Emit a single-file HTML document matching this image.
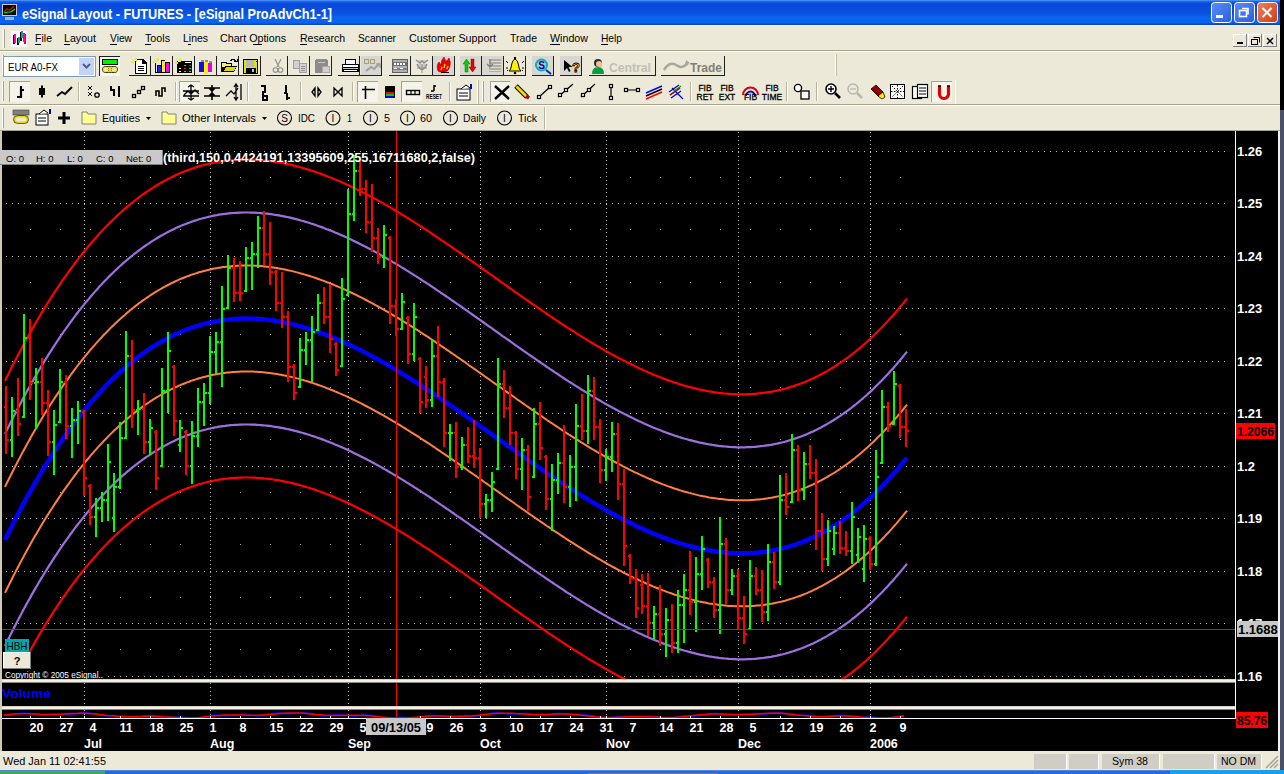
<!DOCTYPE html><html><head><meta charset="utf-8"><style>
html,body{margin:0;padding:0;width:1284px;height:774px;overflow:hidden;background:#ece9d8;}
svg{position:absolute;left:0;top:0;display:block;}
</style></head><body>
<svg width="1284" height="774" viewBox="0 0 1284 774" font-family='"Liberation Sans", sans-serif'>
<defs><linearGradient id="tb" x1="0" y1="0" x2="0" y2="1"><stop offset="0" stop-color="#5a9cf8"/><stop offset="0.06" stop-color="#1a66ee"/><stop offset="0.15" stop-color="#0848d8"/><stop offset="0.55" stop-color="#0a52e0"/><stop offset="0.7" stop-color="#0a66f2"/><stop offset="0.9" stop-color="#0a62ee"/><stop offset="1" stop-color="#0640c8"/></linearGradient><linearGradient id="bb" x1="0" y1="0" x2="1" y2="1"><stop offset="0" stop-color="#5a8ef8"/><stop offset="1" stop-color="#2a5ee0"/></linearGradient><linearGradient id="cb" x1="0" y1="0" x2="1" y2="1"><stop offset="0" stop-color="#f08060"/><stop offset="1" stop-color="#d03c10"/></linearGradient></defs>
<rect x="0" y="0" width="1284" height="25" fill="url(#tb)"/>
<rect x="2" y="4" width="15" height="12" fill="#c8c8c8"/><rect x="3" y="5" width="13" height="10" fill="#000"/><polyline points="4,12 7,9 10,10 14,6" stroke="#f00" stroke-width="1.2" fill="none"/><polyline points="4,13 8,12 11,12 15,9" stroke="#0f0" stroke-width="1.2" fill="none"/><rect x="5" y="17" width="9" height="3" fill="#b0b0b0"/>
<text x="22" y="18.5" font-size="14.5" font-weight="bold" fill="#fff" textLength="310" lengthAdjust="spacingAndGlyphs">eSignal Layout - FUTURES - [eSignal ProAdvCh1-1]</text>
<rect x="1211.5" y="2.5" width="20" height="20" rx="3" fill="url(#bb)" stroke="#fff" stroke-width="1"/>
<rect x="1234.5" y="2.5" width="20" height="20" rx="3" fill="url(#bb)" stroke="#fff" stroke-width="1"/>
<rect x="1257.5" y="2.5" width="20" height="20" rx="3" fill="url(#cb)" stroke="#fff" stroke-width="1"/>
<rect x="1216" y="15" width="7" height="3" fill="#fff"/>
<rect x="1239.5" y="10.5" width="7" height="6" fill="none" stroke="#fff" stroke-width="1.6"/><path d="M1242 8.5h6v6" fill="none" stroke="#fff" stroke-width="1.6"/>
<path d="M1262.5 8l9 9M1271.5 8l-9 9" stroke="#fff" stroke-width="2"/>
<rect x="1280" y="0" width="4" height="25" fill="#000"/>
<rect x="0" y="25" width="1280" height="106" fill="#ece9d8"/>
<rect x="0" y="25" width="1280" height="1" fill="#f6f4ec"/>
<rect x="0" y="50" width="1280" height="1" fill="#a8a490"/><rect x="0" y="51" width="1280" height="1" fill="#fff"/>
<rect x="3" y="29" width="1" height="19" fill="#fff"/><rect x="4" y="29" width="1" height="19" fill="#a0a0a0"/>
<rect x="11" y="31" width="16" height="16" fill="#fff"/><rect x="13" y="35" width="2" height="9" fill="#000"/><rect x="14" y="34" width="2" height="9" fill="#f0a"/><rect x="17" y="38" width="2" height="7" fill="#000"/><rect x="18" y="37" width="2" height="6" fill="#0a8"/><rect x="20" y="32" width="2" height="9" fill="#000"/><rect x="21" y="31" width="2" height="7" fill="#0a8"/><rect x="24" y="34" width="2" height="10" fill="#f00"/><rect x="23" y="33" width="2" height="9" fill="#f0a"/>
<text x="35" y="42" font-size="11.5" fill="#000" textLength="17" lengthAdjust="spacingAndGlyphs">File</text>
<text x="64" y="42" font-size="11.5" fill="#000" textLength="32" lengthAdjust="spacingAndGlyphs">Layout</text>
<text x="110" y="42" font-size="11.5" fill="#000" textLength="22" lengthAdjust="spacingAndGlyphs">View</text>
<text x="145" y="42" font-size="11.5" fill="#000" textLength="25" lengthAdjust="spacingAndGlyphs">Tools</text>
<text x="183" y="42" font-size="11.5" fill="#000" textLength="25" lengthAdjust="spacingAndGlyphs">Lines</text>
<text x="220" y="42" font-size="11.5" fill="#000" textLength="66" lengthAdjust="spacingAndGlyphs">Chart Options</text>
<text x="300" y="42" font-size="11.5" fill="#000" textLength="45" lengthAdjust="spacingAndGlyphs">Research</text>
<text x="358" y="42" font-size="11.5" fill="#000" textLength="38" lengthAdjust="spacingAndGlyphs">Scanner</text>
<text x="409" y="42" font-size="11.5" fill="#000" textLength="87" lengthAdjust="spacingAndGlyphs">Customer Support</text>
<text x="510" y="42" font-size="11.5" fill="#000" textLength="27" lengthAdjust="spacingAndGlyphs">Trade</text>
<text x="550" y="42" font-size="11.5" fill="#000" textLength="38" lengthAdjust="spacingAndGlyphs">Window</text>
<text x="601" y="42" font-size="11.5" fill="#000" textLength="21" lengthAdjust="spacingAndGlyphs">Help</text>
<rect x="35" y="44" width="6" height="1" fill="#000"/>
<rect x="64" y="44" width="6" height="1" fill="#000"/>
<rect x="110" y="44" width="7" height="1" fill="#000"/>
<rect x="145" y="44" width="6" height="1" fill="#000"/>
<rect x="188" y="44" width="3" height="1" fill="#000"/>
<rect x="253" y="44" width="9" height="1" fill="#000"/>
<rect x="300" y="44" width="7" height="1" fill="#000"/>
<rect x="550" y="44" width="10" height="1" fill="#000"/>
<rect x="601" y="44" width="7" height="1" fill="#000"/>
<rect x="1233" y="34" width="14" height="13" fill="#ece9d8"/><rect x="1233" y="34" width="14" height="1" fill="#fff"/><rect x="1233" y="34" width="1" height="13" fill="#fff"/><rect x="1233" y="46" width="14" height="1" fill="#808080"/><rect x="1246" y="34" width="1" height="13" fill="#808080"/>
<rect x="1248" y="34" width="14" height="13" fill="#ece9d8"/><rect x="1248" y="34" width="14" height="1" fill="#fff"/><rect x="1248" y="34" width="1" height="13" fill="#fff"/><rect x="1248" y="46" width="14" height="1" fill="#808080"/><rect x="1261" y="34" width="1" height="13" fill="#808080"/>
<rect x="1263" y="34" width="14" height="13" fill="#ece9d8"/><rect x="1263" y="34" width="14" height="1" fill="#fff"/><rect x="1263" y="34" width="1" height="13" fill="#fff"/><rect x="1263" y="46" width="14" height="1" fill="#808080"/><rect x="1276" y="34" width="1" height="13" fill="#808080"/>
<rect x="1237" y="42" width="6" height="2" fill="#000"/>
<rect x="1251.5" y="39.5" width="6" height="5" fill="none" stroke="#000"/><path d="M1253.5 37.5h6v5" fill="none" stroke="#000"/>
<path d="M1267 38l6 6M1273 38l-6 6" stroke="#000" stroke-width="1.5"/>
<rect x="0" y="104" width="1280" height="1" fill="#a8a490"/><rect x="0" y="105" width="1280" height="1" fill="#fff"/>
<rect x="0" y="130" width="1280" height="1" fill="#a8a490"/>
<rect x="2" y="55" width="1" height="20" fill="#fff"/><rect x="3" y="55" width="1" height="20" fill="#a8a490"/>
<rect x="2" y="81" width="1" height="20" fill="#fff"/><rect x="3" y="81" width="1" height="20" fill="#a8a490"/>
<rect x="2" y="108" width="1" height="20" fill="#fff"/><rect x="3" y="108" width="1" height="20" fill="#a8a490"/>
<rect x="3.5" y="56.5" width="92" height="20" fill="#fff" stroke="#7f9db9"/>
<text x="8" y="71" font-size="11.5" fill="#000" textLength="50" lengthAdjust="spacingAndGlyphs">EUR A0-FX</text>
<rect x="79" y="58" width="15" height="17" fill="#c4d4f8"/><path d="M83 64l3.5 3.5 3.5-3.5" stroke="#4d6185" stroke-width="2" fill="none"/>
<g shape-rendering="crispEdges">
<rect x="99" y="56" width="21" height="20" fill="#f6f5ee"/><rect x="99" y="56" width="21" height="1" fill="#202020"/><rect x="99" y="56" width="1" height="20" fill="#202020"/>
<rect x="361" y="56" width="20" height="19" fill="#d8d6d2"/>
<rect x="433" y="56" width="21" height="19" fill="#d8d6d2"/>
<rect x="460" y="56" width="21" height="19" fill="#d8d6d2"/>
<rect x="482" y="56" width="21" height="19" fill="#d8d6d2"/>
<rect x="532" y="56" width="21" height="19" fill="#d8d6d2"/>
<rect x="560" y="56" width="21" height="19" fill="#d8d6d2"/>
<rect x="129" y="75" width="22" height="1" fill="#202020"/><rect x="150" y="56" width="1" height="20" fill="#202020"/>
<rect x="151" y="75" width="22" height="1" fill="#202020"/><rect x="172" y="56" width="1" height="20" fill="#202020"/>
<rect x="173" y="75" width="22" height="1" fill="#202020"/><rect x="194" y="56" width="1" height="20" fill="#202020"/>
<rect x="195" y="75" width="22" height="1" fill="#202020"/><rect x="216" y="56" width="1" height="20" fill="#202020"/>
<rect x="217" y="75" width="22" height="1" fill="#202020"/><rect x="238" y="56" width="1" height="20" fill="#202020"/>
<rect x="239" y="75" width="22" height="1" fill="#202020"/><rect x="260" y="56" width="1" height="20" fill="#202020"/>
<rect x="266" y="75" width="22" height="1" fill="#202020"/><rect x="287" y="56" width="1" height="20" fill="#202020"/>
<rect x="288" y="75" width="22" height="1" fill="#202020"/><rect x="309" y="56" width="1" height="20" fill="#202020"/>
<rect x="310" y="75" width="22" height="1" fill="#202020"/><rect x="331" y="56" width="1" height="20" fill="#202020"/>
<rect x="338" y="75" width="22" height="1" fill="#202020"/><rect x="359" y="56" width="1" height="20" fill="#202020"/>
<rect x="360" y="75" width="22" height="1" fill="#202020"/><rect x="381" y="56" width="1" height="20" fill="#202020"/>
<rect x="389" y="75" width="22" height="1" fill="#202020"/><rect x="410" y="56" width="1" height="20" fill="#202020"/>
<rect x="411" y="75" width="22" height="1" fill="#202020"/><rect x="432" y="56" width="1" height="20" fill="#202020"/>
<rect x="433" y="75" width="22" height="1" fill="#202020"/><rect x="454" y="56" width="1" height="20" fill="#202020"/>
<rect x="460" y="75" width="22" height="1" fill="#202020"/><rect x="481" y="56" width="1" height="20" fill="#202020"/>
<rect x="482" y="75" width="22" height="1" fill="#202020"/><rect x="503" y="56" width="1" height="20" fill="#202020"/>
<rect x="504" y="75" width="22" height="1" fill="#202020"/><rect x="525" y="56" width="1" height="20" fill="#202020"/>
<rect x="532" y="75" width="22" height="1" fill="#202020"/><rect x="553" y="56" width="1" height="20" fill="#202020"/>
<rect x="560" y="75" width="22" height="1" fill="#202020"/><rect x="581" y="56" width="1" height="20" fill="#202020"/>
<rect x="589" y="75" width="67" height="1" fill="#202020"/><rect x="655" y="56" width="1" height="20" fill="#202020"/>
<rect x="661" y="75" width="64" height="1" fill="#202020"/><rect x="724" y="56" width="1" height="20" fill="#202020"/>
<rect x="102" y="59" width="16" height="6" fill="#000"/><rect x="103" y="60" width="14" height="4" fill="#00f000"/>
</g>
<rect x="102.5" y="66.5" width="9" height="6" rx="3" fill="none" stroke="#000" stroke-width="1"/><rect x="108.5" y="66.5" width="9" height="6" rx="3" fill="none" stroke="#000" stroke-width="1"/><rect x="103.5" y="67.5" width="7" height="4" rx="2" fill="none" stroke="#f0e000" stroke-width="1.4"/><rect x="109.5" y="67.5" width="7" height="4" rx="2" fill="none" stroke="#f0e000" stroke-width="1.4"/><path d="M106 69.5h8" stroke="#f0e000" stroke-width="1.2"/>
<g shape-rendering="crispEdges">
<path d="M135 59h8l4 4v11h-12z" fill="#000"/><path d="M136 60h6v4h4v9h-10z" fill="#fff"/><rect x="138" y="66" width="6" height="1" fill="#000"/><rect x="138" y="68" width="6" height="1" fill="#000"/><rect x="138" y="70" width="6" height="1" fill="#000"/>
<path d="M132 59l3 3M136 58v3M131 62h3M138 60l-2 2" stroke="#f0f000" stroke-width="1.2"/>
<rect x="155" y="61" width="1" height="12" fill="#000"/><rect x="155" y="72" width="15" height="1" fill="#000"/><rect x="157" y="65" width="4" height="7" fill="#000"/><rect x="158" y="66" width="3" height="6" fill="#2020ff"/><rect x="161" y="60" width="4" height="12" fill="#000"/><rect x="162" y="61" width="3" height="11" fill="#f8f000"/><rect x="165" y="62" width="5" height="10" fill="#000"/><rect x="166" y="63" width="3" height="9" fill="#ff00ff"/>
<path d="M154 59l3 3M158 58v3M153 62h3" stroke="#f0f000" stroke-width="1.2"/>
<rect x="177" y="61" width="15" height="12" fill="#000"/><rect x="185" y="62" width="6" height="1" fill="#fff"/><rect x="184" y="65" width="2" height="1" fill="#0f0"/><rect x="189" y="65" width="2" height="1" fill="#f00"/><rect x="184" y="68" width="2" height="1" fill="#f00"/><rect x="189" y="68" width="2" height="1" fill="#0f0"/><rect x="184" y="71" width="2" height="1" fill="#0f0"/><rect x="189" y="71" width="2" height="1" fill="#0f0"/><rect x="179" y="68" width="2" height="1" fill="#fff"/><rect x="179" y="71" width="2" height="1" fill="#fff"/>
<path d="M176 59l3 3M180 58v4M175 63h3M182 60l-2 2" stroke="#f0f000" stroke-width="1.2"/>
<rect x="199" y="62" width="5" height="10" fill="#1010e0"/><rect x="204" y="62" width="4" height="12" fill="#f8f000"/><rect x="208" y="63" width="4" height="9" fill="#e000e0"/><rect x="201" y="60" width="3" height="2" fill="#909090"/><rect x="205" y="60" width="3" height="2" fill="#909090"/><rect x="209" y="61" width="3" height="2" fill="#909090"/>
<path d="M221 62h5l1 1h5v9h-11z" fill="#000"/><path d="M222 63h4v1h5v3h-9z" fill="#f0f070"/><path d="M222 72l3-6h12l-3 6z" fill="#000"/><path d="M224 71l2-4h10l-2 4z" fill="#e0d800"/>
<path d="M230 61q3-3 6 0" stroke="#000" fill="none" stroke-width="1.2"/><path d="M234 61h3v-2" stroke="#000" fill="none"/>
<rect x="243" y="59" width="15" height="15" fill="#000"/><rect x="244" y="60" width="13" height="13" fill="#e8e000"/><rect x="246" y="60" width="8" height="7" fill="#b8b8b8"/><rect x="246" y="68" width="10" height="5" fill="#000"/><rect x="252" y="69" width="2" height="3" fill="#c0c0c0"/><rect x="256" y="61" width="1" height="1" fill="#000"/>
</g>
<path d="M275 59l4 8M281 59l-4 8" stroke="#909090" stroke-width="1.1"/><circle cx="275.5" cy="70" r="2.3" fill="none" stroke="#909090" stroke-width="1.1"/><circle cx="280.5" cy="70" r="2.3" fill="none" stroke="#909090" stroke-width="1.1"/>
<g shape-rendering="crispEdges">
<rect x="293" y="60" width="7" height="9" fill="#a0a0a0"/><rect x="294" y="61" width="5" height="7" fill="#d0d0d0"/><rect x="299" y="63" width="8" height="10" fill="#a0a0a0"/><rect x="300" y="64" width="6" height="8" fill="#d0d0d0"/><rect x="301" y="66" width="4" height="1" fill="#909090"/><rect x="301" y="68" width="4" height="1" fill="#909090"/><rect x="301" y="70" width="4" height="1" fill="#909090"/>
<rect x="315" y="60" width="13" height="13" fill="#8c8c8c"/><rect x="316" y="59" width="11" height="1" fill="#8c8c8c"/><rect x="318" y="62" width="7" height="1" fill="#c8c8c8"/><rect x="322" y="66" width="8" height="7" fill="#a8a8a8"/><rect x="323" y="67" width="6" height="5" fill="#d0d0d0"/>
<rect x="345" y="59" width="11" height="5" fill="#000"/><rect x="346" y="60" width="9" height="4" fill="#fff"/><rect x="342" y="64" width="17" height="8" fill="#000"/><rect x="343" y="65" width="15" height="2" fill="#fff"/><rect x="343" y="68" width="15" height="1" fill="#c0c0c0"/><rect x="344" y="70" width="13" height="1" fill="#fff"/>
<rect x="364" y="59" width="4" height="4" fill="none" stroke="#a8a070"/><rect x="370" y="59" width="4" height="4" fill="none" stroke="#a8a070"/>
</g>
<path d="M366 71l5-4 3 2 5-5" stroke="#a0a0a0" stroke-width="2" fill="none"/><path d="M376 64h4v4" stroke="#a0a0a0" stroke-width="1.5" fill="none"/>
<g shape-rendering="crispEdges">
<rect x="392" y="59" width="16" height="14" fill="#606060"/><rect x="393" y="60" width="14" height="12" fill="#b0b0b0"/><rect x="393" y="62" width="14" height="4" fill="#707070"/><rect x="394" y="63" width="2" height="2" fill="#fff"/><rect x="397" y="63" width="2" height="2" fill="#fff"/><rect x="400" y="63" width="2" height="2" fill="#fff"/><rect x="403" y="63" width="2" height="2" fill="#fff"/><rect x="393" y="68" width="14" height="2" fill="#808080"/><rect x="394" y="68" width="3" height="1" fill="#fff"/><rect x="400" y="68" width="3" height="1" fill="#fff"/>
</g>
<path d="M416 60l4 3 2-2 2 2 4-3M417 64q5 11 10 0" stroke="#909090" stroke-width="1.5" fill="#c8c8c8"/><path d="M422 64v9M417 68h10" stroke="#909090"/>
<path d="M438 71q-2-6 1-9l2 3q0-5 3-8q1 4 3 4q1-2 2-3q2 4 1 8q-1 5-5 6h-5z" fill="#f00000" stroke="#a00000" stroke-width="0.6"/><path d="M441 70l1-3M444 68l1-4M447 69l1-3" stroke="#ffe000" stroke-width="1.3"/><rect x="441" y="72" width="8" height="1" fill="#000"/>
<path d="M463 64l3.5-5 3.5 5h-2v8h-3v-8z" fill="#00d000" stroke="#008000" stroke-width="0.5"/><path d="M469 67l3.5 5 3.5-5h-2v-8h-3v8z" fill="#f00000" stroke="#900000" stroke-width="0.5"/>
<g shape-rendering="crispEdges"><rect x="489" y="59" width="12" height="13" fill="#b0aca0"/><rect x="489" y="61" width="12" height="1" fill="#e0dcd0"/><rect x="489" y="64" width="12" height="1" fill="#e0dcd0"/><rect x="489" y="67" width="12" height="1" fill="#e0dcd0"/><rect x="489" y="70" width="12" height="1" fill="#e0dcd0"/></g>
<path d="M490 59v8M487 64l3 3 3-3" stroke="#808080" stroke-width="1.4" fill="none"/>
<path d="M509 71q2-1 2.5-6q0.5-5 3.5-6q3 1 3.5 6q0.5 5 2.5 6z" fill="#fff000" stroke="#000" stroke-width="1"/><rect x="514" y="57" width="2" height="2" fill="#000"/><circle cx="515" cy="73" r="1.3" fill="#000"/><path d="M506 61l2 2M524 61l-2 2M506 68h2M522 68h2M507 71l1-1M523 71l-1-1" stroke="#000"/>
<circle cx="541.5" cy="65" r="5.5" fill="#b8c8d8" stroke="#00b0c0" stroke-width="2"/><text x="541.5" y="69" font-size="10" font-weight="bold" fill="#000080" text-anchor="middle">S</text><path d="M546 70l5 4" stroke="#0030c0" stroke-width="2"/>
<path d="M564 60v11l3-3 2 4 1.5-1-2-4h4z" fill="#000"/><text x="576" y="72" font-size="13" font-weight="bold" fill="#ffe800" stroke="#000" stroke-width="0.8" text-anchor="middle">?</text>
<circle cx="598" cy="63" r="4" fill="#2a2a2a"/><path d="M592 74q0-7 6-7q6 0 6 7z" fill="#00a040"/><circle cx="599" cy="64" r="3" fill="#f0c090"/>
<text x="609" y="72" font-size="13" font-weight="bold" fill="#c0c0b8" textLength="42" lengthAdjust="spacingAndGlyphs">Central</text>
<path d="M664 70q6-10 14-4q4 3 10-3" stroke="#a8a8a0" stroke-width="2.5" fill="none"/><path d="M686 60l4 3-5 2z" fill="#a8a8a0"/>
<text x="690" y="72" font-size="13" font-weight="bold" fill="#808078" textLength="32" lengthAdjust="spacingAndGlyphs">Trade</text>
<rect x="835" y="54" width="1" height="22" fill="#fff"/><rect x="836" y="54" width="1" height="22" fill="#c0bca8"/>
<rect x="9" y="81" width="21" height="21" fill="#f6f4ea"/><rect x="9" y="81" width="21" height="1" fill="#a0a0a0"/><rect x="9" y="81" width="1" height="21" fill="#a0a0a0"/>
<rect x="179" y="81" width="21" height="21" fill="#f6f4ea"/><rect x="179" y="81" width="21" height="1" fill="#a0a0a0"/><rect x="179" y="81" width="1" height="21" fill="#a0a0a0"/>
<rect x="357" y="81" width="21" height="21" fill="#f6f4ea"/><rect x="357" y="81" width="21" height="1" fill="#a0a0a0"/><rect x="357" y="81" width="1" height="21" fill="#a0a0a0"/>
<rect x="401" y="81" width="21" height="21" fill="#f6f4ea"/><rect x="401" y="81" width="21" height="1" fill="#a0a0a0"/><rect x="401" y="81" width="1" height="21" fill="#a0a0a0"/>
<rect x="490" y="81" width="20" height="21" fill="#f6f4ea"/><rect x="490" y="81" width="20" height="1" fill="#a0a0a0"/><rect x="490" y="81" width="1" height="21" fill="#a0a0a0"/>
<rect x="931" y="81" width="21" height="21" fill="#f6f4ea"/><rect x="931" y="81" width="21" height="1" fill="#a0a0a0"/><rect x="931" y="81" width="1" height="21" fill="#a0a0a0"/>
<rect x="78" y="82" width="1" height="19" fill="#b8b4a0"/><rect x="79" y="82" width="1" height="19" fill="#fff"/>
<rect x="175" y="82" width="1" height="19" fill="#b8b4a0"/><rect x="176" y="82" width="1" height="19" fill="#fff"/>
<rect x="247" y="82" width="1" height="19" fill="#b8b4a0"/><rect x="248" y="82" width="1" height="19" fill="#fff"/>
<rect x="300" y="82" width="1" height="19" fill="#b8b4a0"/><rect x="301" y="82" width="1" height="19" fill="#fff"/>
<rect x="352" y="82" width="1" height="19" fill="#b8b4a0"/><rect x="353" y="82" width="1" height="19" fill="#fff"/>
<rect x="449" y="82" width="1" height="19" fill="#b8b4a0"/><rect x="450" y="82" width="1" height="19" fill="#fff"/>
<rect x="690" y="82" width="1" height="19" fill="#b8b4a0"/><rect x="691" y="82" width="1" height="19" fill="#fff"/>
<rect x="786" y="82" width="1" height="19" fill="#b8b4a0"/><rect x="787" y="82" width="1" height="19" fill="#fff"/>
<rect x="816" y="82" width="1" height="19" fill="#b8b4a0"/><rect x="817" y="82" width="1" height="19" fill="#fff"/>
<path d="M21 86v12M17 97h4M21 90h3" stroke="#000" stroke-width="2.2" fill="none"/>
<rect x="39" y="88" width="6" height="7" fill="#000"/><path d="M42 85.5v12" stroke="#000" stroke-width="2"/>
<polyline points="57,96 62,92 65,94 72,87" stroke="#000" stroke-width="1.8" fill="none"/>
<path d="M88 86l4 4M92 86l-4 4M88 92l4 4M92 92l-4 4" stroke="#000" stroke-width="1"/><circle cx="97" cy="95" r="2.2" fill="none" stroke="#000" stroke-width="1.3"/>
<path d="M111 86v4h3v6M119 86v11" stroke="#000" stroke-width="2" fill="none"/>
<rect x="132.5" y="94.5" width="3" height="3" fill="none" stroke="#000" stroke-width="1.3"/><rect x="137.5" y="90.5" width="3" height="3" fill="none" stroke="#000" stroke-width="1.3"/><rect x="141.5" y="86.5" width="3" height="3" fill="none" stroke="#000" stroke-width="1.3"/>
<path d="M156 96v-5h3v5h3v-8h3v4" stroke="#000" stroke-width="1.6" fill="none"/>
<path d="M183 91h16M183 96h16M191 85v15M188 87l3-2 3 2M188 98l3 2 3-2M184 95l4-4 3 3 4-4 4 4" stroke="#000" stroke-width="1.3" fill="none"/>
<path d="M204 88h16M204 96h16M212 85v15M209 88l3 3 3-3M209 96l3-3 3 3" stroke="#000" stroke-width="1.6" fill="none"/>
<path d="M226 96l5-5 3 3 4-6M236 84v16M241 84v16M234 87l2-3 2 3M234 97l2 3 2-3" stroke="#000" stroke-width="1.3" fill="none"/>
<path d="M261 86h4v6h-2v4h4v4h-4v-4" stroke="#000" stroke-width="2" fill="none"/>
<path d="M286 85v8h-2M287 93v7M287 98h3" stroke="#000" stroke-width="2" fill="none"/>
<path d="M315 88l-3 4 3 4zM318 88l3 4-3 4z" fill="none" stroke="#000" stroke-width="1.3"/>
<path d="M334 88l4 4-4 4zM342 88l-4 4 4 4z" fill="none" stroke="#000" stroke-width="1.3"/>
<path d="M365.5 86v13M362 89.5h13" stroke="#000" stroke-width="1.6"/>
<rect x="385" y="86" width="10" height="12" fill="#000"/><rect x="386" y="92" width="8" height="2" fill="#f00"/><rect x="386" y="94" width="8" height="2" fill="#0c0"/><rect x="386" y="96" width="8" height="2" fill="#00f"/>
<rect x="406.5" y="90.5" width="13" height="4" fill="none" stroke="#000" stroke-width="1.4"/><path d="M411 90v5M415 90v5" stroke="#000" stroke-width="1.2"/>
<text x="434" y="99" font-size="7.5" font-weight="bold" fill="#000" text-anchor="middle" textLength="16" lengthAdjust="spacingAndGlyphs">RESET</text><path d="M434 85v6M431 91h3M434 86h2" stroke="#000" stroke-width="1.5" fill="none"/>
<rect x="457" y="89" width="13" height="11" fill="#fff" stroke="#000"/><path d="M459 93h9M459 96h9" stroke="#000"/><path d="M461 89l5-4 4 3" stroke="#000" fill="#fff"/><rect x="470" y="84" width="2" height="5" fill="#00a"/>
<rect x="477" y="80" width="1" height="24" fill="#fff"/><rect x="478" y="80" width="1" height="24" fill="#b8b4a0"/>
<rect x="482" y="81" width="1" height="21" fill="#fff"/><rect x="483" y="81" width="1" height="21" fill="#a8a490"/>
<path d="M495 86l14 13M509 86l-14 13" stroke="#000" stroke-width="2.4"/>
<path d="M516 86l11 11" stroke="#000" stroke-width="5"/><path d="M516.5 86.5l10 10" stroke="#f0d800" stroke-width="3"/><path d="M526 96l3 2" stroke="#c00000" stroke-width="3.5"/>
<path d="M539 97l11-10M558 97l15-13M581 97l14-13" stroke="#000" stroke-width="1.2"/>
<rect x="537.5" y="95.5" width="3" height="3" fill="#fff" stroke="#000" stroke-width="1.2"/>
<rect x="548.5" y="85.5" width="3" height="3" fill="#fff" stroke="#000" stroke-width="1.2"/>
<rect x="558.5" y="93.5" width="3" height="3" fill="#fff" stroke="#000" stroke-width="1.2"/>
<rect x="564.5" y="88.5" width="3" height="3" fill="#fff" stroke="#000" stroke-width="1.2"/>
<rect x="581.5" y="93.5" width="3" height="3" fill="#fff" stroke="#000" stroke-width="1.2"/>
<rect x="587.5" y="88.5" width="3" height="3" fill="#fff" stroke="#000" stroke-width="1.2"/>
<rect x="609.5" y="84.5" width="3" height="3" fill="#fff" stroke="#000" stroke-width="1.2"/>
<rect x="609.5" y="96.5" width="3" height="3" fill="#fff" stroke="#000" stroke-width="1.2"/>
<rect x="624.5" y="88.5" width="3" height="3" fill="#fff" stroke="#000" stroke-width="1.2"/>
<rect x="636.5" y="88.5" width="3" height="3" fill="#fff" stroke="#000" stroke-width="1.2"/>
<path d="M611 87v10M627 90h10" stroke="#000" stroke-width="1.2"/>
<path d="M646 93l16-7" stroke="#0000ff" stroke-width="1.4"/><path d="M646 96l16-7" stroke="#000" stroke-width="1.4"/><path d="M646 99l16-7" stroke="#ff0000" stroke-width="1.4"/>
<path d="M669 92l10-7M670 95l10-7M671 98l10-7M672 88l11 11" stroke="#0000c0" stroke-width="1.2"/><path d="M670 95l10-7" stroke="#c00000" stroke-width="1.2"/><path d="M674 91l7-5" stroke="#00a000" stroke-width="1.2"/>
<text x="705" y="91" font-size="8.5" fill="#000" text-anchor="middle" stroke="#000" stroke-width="0.3">FIB</text><text x="705" y="99.5" font-size="8.5" fill="#000" text-anchor="middle" stroke="#000" stroke-width="0.3">RET</text>
<text x="727" y="91" font-size="8.5" fill="#000" text-anchor="middle" stroke="#000" stroke-width="0.3">FIB</text><text x="727" y="99.5" font-size="8.5" fill="#000" text-anchor="middle" stroke="#000" stroke-width="0.3">EXT</text>
<text x="772" y="91" font-size="8.5" fill="#000" text-anchor="middle" stroke="#000" stroke-width="0.3">FIB</text><text x="772" y="99.5" font-size="8.5" fill="#000" text-anchor="middle" stroke="#000" stroke-width="0.3">TIME</text>
<path d="M743 95a7.5 7.5 0 0 1 15 0" stroke="#e00000" stroke-width="2" fill="none"/><path d="M746 96a4.5 4.5 0 0 1 9 0" stroke="#0000e0" stroke-width="1.8" fill="none"/><text x="750.5" y="99.5" font-size="8.5" fill="#000" text-anchor="middle" stroke="#000" stroke-width="0.3">FIB</text>
<rect x="801" y="91" width="8" height="8" fill="#fff" stroke="#000" stroke-width="1.3"/><circle cx="798" cy="88" r="3.6" fill="#fff" stroke="#000" stroke-width="1.4"/>
<circle cx="831" cy="89" r="5" fill="#fff" stroke="#000" stroke-width="1.6"/><path d="M835 93l5 5" stroke="#000" stroke-width="2.6"/><path d="M828 89h6M831 86v6" stroke="#000" stroke-width="1.4"/>
<circle cx="853" cy="89" r="5" fill="none" stroke="#b8b8b0" stroke-width="1.5"/><path d="M857 93l5 5" stroke="#b8b8b0" stroke-width="2.5"/><path d="M850 89h6" stroke="#b8b8b0" stroke-width="1.3"/>
<path d="M871 89l5-4 7 7-5 4z" fill="#900000" stroke="#000" stroke-width="0.8"/><path d="M878 96l5-4 2 5-3 2z" fill="#ffee00" stroke="#000" stroke-width="0.8"/>
<rect x="890.5" y="84.5" width="14" height="14" fill="#fff" stroke="#000"/><path d="M892 86l11 11M903 86l-11 11M897.5 85v13M891 91.5h13" stroke="#000" stroke-dasharray="1.5 1.5"/>
<rect x="912.5" y="86.5" width="9" height="12" fill="#fff" stroke="#000" stroke-width="1.2"/><rect x="917.5" y="84.5" width="10" height="13" fill="#fff" stroke="#000" stroke-width="1.2"/><path d="M919 88h7M919 91h7M919 94h7" stroke="#000"/>
<path d="M939.5 86v8a4.5 4.5 0 0 0 9 0v-8" stroke="#e00000" stroke-width="3.2" fill="none"/><path d="M938 86h3M947 86h3" stroke="#000" stroke-width="1.5"/>
<rect x="955" y="80" width="1" height="24" fill="#fff"/>
<rect x="13" y="110" width="16" height="5" fill="#808080" stroke="#404040" stroke-width="0.6"/><rect x="14.5" y="116.5" width="13" height="6" rx="3" fill="none" stroke="#e8d800" stroke-width="2"/><rect x="13.5" y="115.5" width="15" height="8" rx="4" fill="none" stroke="#000" stroke-width="0.6"/>
<rect x="36" y="114" width="12" height="11" fill="#fff" stroke="#000"/><path d="M38 118h8M38 121h8" stroke="#000"/><path d="M39 114l5-4 4 3" stroke="#000" fill="#fff"/><rect x="49" y="109" width="2" height="5" fill="#00a"/>
<path d="M64 112v12M58 118h12" stroke="#000" stroke-width="3"/>
<path d="M82 112h5l1 2h8v10h-14z" fill="#ffff90" stroke="#808080"/>
<text x="102" y="122" font-size="11.5" fill="#000" textLength="38" lengthAdjust="spacingAndGlyphs">Equities</text><path d="M146 117h5l-2.5 3z" fill="#000"/>
<path d="M162 112h5l1 2h8v10h-14z" fill="#ffff90" stroke="#808080"/>
<text x="182" y="122" font-size="11.5" fill="#000" textLength="74" lengthAdjust="spacingAndGlyphs">Other Intervals</text><path d="M262 117h5l-2.5 3z" fill="#000"/>
<circle cx="284.5" cy="118" r="7" fill="none" stroke="#000" stroke-width="1.1"/><text x="284.5" y="122" font-size="10" fill="#000" text-anchor="middle">S</text>
<text x="298" y="122" font-size="11.5" fill="#000" textLength="17" lengthAdjust="spacingAndGlyphs">IDC</text>
<circle cx="333" cy="118" r="7" fill="none" stroke="#000" stroke-width="1.1"/><text x="333" y="122" font-size="10" fill="#000" text-anchor="middle">I</text>
<text x="347" y="122" font-size="11.5" fill="#000" textLength="5" lengthAdjust="spacingAndGlyphs">1</text>
<circle cx="370.5" cy="118" r="7" fill="none" stroke="#000" stroke-width="1.1"/><text x="370.5" y="122" font-size="10" fill="#000" text-anchor="middle">I</text>
<text x="384" y="122" font-size="11.5" fill="#000" textLength="6" lengthAdjust="spacingAndGlyphs">5</text>
<circle cx="407.5" cy="118" r="7" fill="none" stroke="#000" stroke-width="1.1"/><text x="407.5" y="122" font-size="10" fill="#000" text-anchor="middle">I</text>
<text x="420" y="122" font-size="11.5" fill="#000" textLength="12" lengthAdjust="spacingAndGlyphs">60</text>
<circle cx="450.5" cy="118" r="7" fill="none" stroke="#000" stroke-width="1.1"/><text x="450.5" y="122" font-size="10" fill="#000" text-anchor="middle">I</text>
<text x="463" y="122" font-size="11.5" fill="#000" textLength="23" lengthAdjust="spacingAndGlyphs">Daily</text>
<circle cx="504.5" cy="118" r="7" fill="none" stroke="#000" stroke-width="1.1"/><text x="504.5" y="122" font-size="10" fill="#000" text-anchor="middle">I</text>
<text x="518" y="122" font-size="11.5" fill="#000" textLength="19" lengthAdjust="spacingAndGlyphs">Tick</text>
<rect x="544" y="107" width="1" height="22" fill="#b8b4a0"/><rect x="545" y="107" width="1" height="22" fill="#fff"/>
<rect x="0" y="750" width="1280" height="20" fill="#ece9d8"/><rect x="0" y="750" width="1280" height="1" fill="#fff"/>
<text x="3" y="765" font-size="11.5" fill="#000" textLength="103" lengthAdjust="spacingAndGlyphs">Wed Jan 11 02:41:55</text>
<rect x="1034" y="754" width="32" height="15" fill="#d0cdc4"/><rect x="1066" y="754" width="1" height="15" fill="#fff"/>
<rect x="1069" y="754" width="29" height="15" fill="#d0cdc4"/><rect x="1098" y="754" width="1" height="15" fill="#fff"/>
<rect x="1102" y="754" width="57" height="15" fill="#d0cdc4"/><rect x="1159" y="754" width="1" height="15" fill="#fff"/>
<rect x="1163" y="754" width="51" height="15" fill="#d0cdc4"/><rect x="1214" y="754" width="1" height="15" fill="#fff"/>
<rect x="1217" y="754" width="44" height="15" fill="#d0cdc4"/><rect x="1261" y="754" width="1" height="15" fill="#fff"/>
<text x="1112" y="765" font-size="11.5" fill="#000" textLength="36" lengthAdjust="spacingAndGlyphs">Sym 38</text>
<text x="1221" y="765" font-size="11.5" fill="#000" textLength="35" lengthAdjust="spacingAndGlyphs">NO DM</text>
<path d="M1266 768l12-12M1270 768l8-8M1274 768l4-4" stroke="#a8a490" stroke-width="1.5"/>
<rect x="0" y="770" width="1284" height="4" fill="#2f66d8"/><rect x="0" y="770" width="105" height="4" fill="#48a848"/><rect x="1170" y="770" width="114" height="4" fill="#1a9fe8"/><rect x="0" y="770" width="1170" height="1" fill="#4a88e8"/><rect x="588" y="773" width="130" height="1" fill="#d06010"/>
<rect x="1280" y="25" width="4" height="85" fill="#000"/><rect x="1280" y="110" width="4" height="660" fill="#4a5068"/>
<rect x="0" y="131" width="1280" height="620" fill="#000"/>
<rect x="0" y="131" width="2" height="620" fill="#cfcbb8"/>
<path d="M6 676.5H1230 M6 623.5H1230 M6 571.5H1230 M6 518.5H1230 M6 466.5H1230 M6 413.5H1230 M6 361.5H1230 M6 308.5H1230 M6 256.5H1230 M6 203.5H1230 M6 151.5H1230" stroke="#bdbdbd" stroke-width="1" stroke-dasharray="1 5" fill="none"/>
<path d="M30 649.5h1 M60 649.5h1 M90 649.5h1 M120 649.5h1 M150 649.5h1 M180 649.5h1 M210 649.5h1 M240 649.5h1 M270 649.5h1 M300 649.5h1 M330 649.5h1 M360 649.5h1 M390 649.5h1 M420 649.5h1 M450 649.5h1 M480 649.5h1 M510 649.5h1 M540 649.5h1 M570 649.5h1 M600 649.5h1 M630 649.5h1 M660 649.5h1 M690 649.5h1 M720 649.5h1 M750 649.5h1 M780 649.5h1 M810 649.5h1 M840 649.5h1 M870 649.5h1 M900 649.5h1 M30 597.5h1 M60 597.5h1 M90 597.5h1 M120 597.5h1 M150 597.5h1 M180 597.5h1 M210 597.5h1 M240 597.5h1 M270 597.5h1 M300 597.5h1 M330 597.5h1 M360 597.5h1 M390 597.5h1 M420 597.5h1 M450 597.5h1 M480 597.5h1 M510 597.5h1 M540 597.5h1 M570 597.5h1 M600 597.5h1 M630 597.5h1 M660 597.5h1 M690 597.5h1 M720 597.5h1 M750 597.5h1 M780 597.5h1 M810 597.5h1 M840 597.5h1 M870 597.5h1 M900 597.5h1 M30 544.5h1 M60 544.5h1 M90 544.5h1 M120 544.5h1 M150 544.5h1 M180 544.5h1 M210 544.5h1 M240 544.5h1 M270 544.5h1 M300 544.5h1 M330 544.5h1 M360 544.5h1 M390 544.5h1 M420 544.5h1 M450 544.5h1 M480 544.5h1 M510 544.5h1 M540 544.5h1 M570 544.5h1 M600 544.5h1 M630 544.5h1 M660 544.5h1 M690 544.5h1 M720 544.5h1 M750 544.5h1 M780 544.5h1 M810 544.5h1 M840 544.5h1 M870 544.5h1 M900 544.5h1 M30 492.5h1 M60 492.5h1 M90 492.5h1 M120 492.5h1 M150 492.5h1 M180 492.5h1 M210 492.5h1 M240 492.5h1 M270 492.5h1 M300 492.5h1 M330 492.5h1 M360 492.5h1 M390 492.5h1 M420 492.5h1 M450 492.5h1 M480 492.5h1 M510 492.5h1 M540 492.5h1 M570 492.5h1 M600 492.5h1 M630 492.5h1 M660 492.5h1 M690 492.5h1 M720 492.5h1 M750 492.5h1 M780 492.5h1 M810 492.5h1 M840 492.5h1 M870 492.5h1 M900 492.5h1 M30 439.5h1 M60 439.5h1 M90 439.5h1 M120 439.5h1 M150 439.5h1 M180 439.5h1 M210 439.5h1 M240 439.5h1 M270 439.5h1 M300 439.5h1 M330 439.5h1 M360 439.5h1 M390 439.5h1 M420 439.5h1 M450 439.5h1 M480 439.5h1 M510 439.5h1 M540 439.5h1 M570 439.5h1 M600 439.5h1 M630 439.5h1 M660 439.5h1 M690 439.5h1 M720 439.5h1 M750 439.5h1 M780 439.5h1 M810 439.5h1 M840 439.5h1 M870 439.5h1 M900 439.5h1 M30 387.5h1 M60 387.5h1 M90 387.5h1 M120 387.5h1 M150 387.5h1 M180 387.5h1 M210 387.5h1 M240 387.5h1 M270 387.5h1 M300 387.5h1 M330 387.5h1 M360 387.5h1 M390 387.5h1 M420 387.5h1 M450 387.5h1 M480 387.5h1 M510 387.5h1 M540 387.5h1 M570 387.5h1 M600 387.5h1 M630 387.5h1 M660 387.5h1 M690 387.5h1 M720 387.5h1 M750 387.5h1 M780 387.5h1 M810 387.5h1 M840 387.5h1 M870 387.5h1 M900 387.5h1 M30 334.5h1 M60 334.5h1 M90 334.5h1 M120 334.5h1 M150 334.5h1 M180 334.5h1 M210 334.5h1 M240 334.5h1 M270 334.5h1 M300 334.5h1 M330 334.5h1 M360 334.5h1 M390 334.5h1 M420 334.5h1 M450 334.5h1 M480 334.5h1 M510 334.5h1 M540 334.5h1 M570 334.5h1 M600 334.5h1 M630 334.5h1 M660 334.5h1 M690 334.5h1 M720 334.5h1 M750 334.5h1 M780 334.5h1 M810 334.5h1 M840 334.5h1 M870 334.5h1 M900 334.5h1 M30 282.5h1 M60 282.5h1 M90 282.5h1 M120 282.5h1 M150 282.5h1 M180 282.5h1 M210 282.5h1 M240 282.5h1 M270 282.5h1 M300 282.5h1 M330 282.5h1 M360 282.5h1 M390 282.5h1 M420 282.5h1 M450 282.5h1 M480 282.5h1 M510 282.5h1 M540 282.5h1 M570 282.5h1 M600 282.5h1 M630 282.5h1 M660 282.5h1 M690 282.5h1 M720 282.5h1 M750 282.5h1 M780 282.5h1 M810 282.5h1 M840 282.5h1 M870 282.5h1 M900 282.5h1 M30 229.5h1 M60 229.5h1 M90 229.5h1 M120 229.5h1 M150 229.5h1 M180 229.5h1 M210 229.5h1 M240 229.5h1 M270 229.5h1 M300 229.5h1 M330 229.5h1 M360 229.5h1 M390 229.5h1 M420 229.5h1 M450 229.5h1 M480 229.5h1 M510 229.5h1 M540 229.5h1 M570 229.5h1 M600 229.5h1 M630 229.5h1 M660 229.5h1 M690 229.5h1 M720 229.5h1 M750 229.5h1 M780 229.5h1 M810 229.5h1 M840 229.5h1 M870 229.5h1 M900 229.5h1 M30 177.5h1 M60 177.5h1 M90 177.5h1 M120 177.5h1 M150 177.5h1 M180 177.5h1 M210 177.5h1 M240 177.5h1 M270 177.5h1 M300 177.5h1 M330 177.5h1 M360 177.5h1 M390 177.5h1 M420 177.5h1 M450 177.5h1 M480 177.5h1 M510 177.5h1 M540 177.5h1 M570 177.5h1 M600 177.5h1 M630 177.5h1 M660 177.5h1 M690 177.5h1 M720 177.5h1 M750 177.5h1 M780 177.5h1 M810 177.5h1 M840 177.5h1 M870 177.5h1 M900 177.5h1" stroke="#a8a8a8" stroke-width="1" fill="none"/>
<path d="M84.5 132V679M84.5 683V706M84.5 710V718M210.5 132V679M210.5 683V706M210.5 710V718M348.5 132V679M348.5 683V706M348.5 710V718M480.5 132V679M480.5 683V706M480.5 710V718M606.5 132V679M606.5 683V706M606.5 710V718M738.5 132V679M738.5 683V706M738.5 710V718M870.5 132V679M870.5 683V706M870.5 710V718" stroke="#bdbdbd" stroke-width="1" stroke-dasharray="1 3" fill="none"/>
<defs><clipPath id="pp"><rect x="2" y="131" width="1233" height="548"/></clipPath></defs>
<g clip-path="url(#pp)" fill="none" stroke-linejoin="round" shape-rendering="geometricPrecision">
<polyline points="5.0,380.9 7.0,376.8 9.0,372.8 11.0,368.8 13.0,364.8 15.0,360.9 17.0,357.0 19.0,353.2 21.0,349.4 23.0,345.6 25.0,341.9 27.0,338.3 29.0,334.7 31.0,331.1 33.0,327.6 35.0,324.1 37.0,320.7 39.0,317.3 41.0,313.9 43.0,310.6 45.0,307.3 47.0,304.1 49.0,300.9 51.0,297.8 53.0,294.7 55.0,291.6 57.0,288.6 59.0,285.6 61.0,282.7 63.0,279.7 65.0,276.9 67.0,274.1 69.0,271.3 71.0,268.5 73.0,265.8 75.0,263.2 77.0,260.5 79.0,257.9 81.0,255.4 83.0,252.9 85.0,250.4 87.0,248.0 89.0,245.6 91.0,243.2 93.0,240.9 95.0,238.6 97.0,236.4 99.0,234.1 101.0,232.0 103.0,229.8 105.0,227.7 107.0,225.7 109.0,223.6 111.0,221.6 113.0,219.7 115.0,217.8 117.0,215.9 119.0,214.0 121.0,212.2 123.0,210.4 125.0,208.7 127.0,206.9 129.0,205.3 131.0,203.6 133.0,202.0 135.0,200.4 137.0,198.9 139.0,197.3 141.0,195.9 143.0,194.4 145.0,193.0 147.0,191.6 149.0,190.3 151.0,188.9 153.0,187.6 155.0,186.4 157.0,185.2 159.0,184.0 161.0,182.8 163.0,181.7 165.0,180.6 167.0,179.5 169.0,178.5 171.0,177.4 173.0,176.5 175.0,175.5 177.0,174.6 179.0,173.7 181.0,172.8 183.0,172.0 185.0,171.2 187.0,170.4 189.0,169.7 191.0,168.9 193.0,168.3 195.0,167.6 197.0,167.0 199.0,166.3 201.0,165.8 203.0,165.2 205.0,164.7 207.0,164.2 209.0,163.7 211.0,163.3 213.0,162.8 215.0,162.4 217.0,162.1 219.0,161.7 221.0,161.4 223.0,161.1 225.0,160.9 227.0,160.6 229.0,160.4 231.0,160.2 233.0,160.0 235.0,159.9 237.0,159.8 239.0,159.7 241.0,159.6 243.0,159.5 245.0,159.5 247.0,159.5 249.0,159.5 251.0,159.6 253.0,159.6 255.0,159.7 257.0,159.8 259.0,160.0 261.0,160.1 263.0,160.3 265.0,160.5 267.0,160.7 269.0,160.9 271.0,161.2 273.0,161.5 275.0,161.8 277.0,162.1 279.0,162.4 281.0,162.8 283.0,163.2 285.0,163.6 287.0,164.0 289.0,164.4 291.0,164.9 293.0,165.4 295.0,165.9 297.0,166.4 299.0,166.9 301.0,167.5 303.0,168.0 305.0,168.6 307.0,169.2 309.0,169.8 311.0,170.5 313.0,171.1 315.0,171.8 317.0,172.5 319.0,173.2 321.0,173.9 323.0,174.6 325.0,175.4 327.0,176.2 329.0,176.9 331.0,177.7 333.0,178.5 335.0,179.4 337.0,180.2 339.0,181.1 341.0,181.9 343.0,182.8 345.0,183.7 347.0,184.6 349.0,185.6 351.0,186.5 353.0,187.5 355.0,188.4 357.0,189.4 359.0,190.4 361.0,191.4 363.0,192.4 365.0,193.5 367.0,194.5 369.0,195.6 371.0,196.6 373.0,197.7 375.0,198.8 377.0,199.9 379.0,201.0 381.0,202.1 383.0,203.2 385.0,204.4 387.0,205.5 389.0,206.7 391.0,207.9 393.0,209.1 395.0,210.2 397.0,211.4 399.0,212.6 401.0,213.9 403.0,215.1 405.0,216.3 407.0,217.6 409.0,218.8 411.0,220.1 413.0,221.3 415.0,222.6 417.0,223.9 419.0,225.2 421.0,226.5 423.0,227.8 425.0,229.1 427.0,230.4 429.0,231.7 431.0,233.0 433.0,234.4 435.0,235.7 437.0,237.1 439.0,238.4 441.0,239.8 443.0,241.1 445.0,242.5 447.0,243.9 449.0,245.2 451.0,246.6 453.0,248.0 455.0,249.4 457.0,250.8 459.0,252.1 461.0,253.5 463.0,254.9 465.0,256.3 467.0,257.7 469.0,259.2 471.0,260.6 473.0,262.0 475.0,263.4 477.0,264.8 479.0,266.2 481.0,267.6 483.0,269.0 485.0,270.5 487.0,271.9 489.0,273.3 491.0,274.7 493.0,276.2 495.0,277.6 497.0,279.0 499.0,280.4 501.0,281.8 503.0,283.3 505.0,284.7 507.0,286.1 509.0,287.5 511.0,288.9 513.0,290.3 515.0,291.8 517.0,293.2 519.0,294.6 521.0,296.0 523.0,297.4 525.0,298.8 527.0,300.2 529.0,301.6 531.0,303.0 533.0,304.4 535.0,305.7 537.0,307.1 539.0,308.5 541.0,309.9 543.0,311.2 545.0,312.6 547.0,314.0 549.0,315.3 551.0,316.7 553.0,318.0 555.0,319.4 557.0,320.7 559.0,322.0 561.0,323.3 563.0,324.6 565.0,326.0 567.0,327.3 569.0,328.6 571.0,329.8 573.0,331.1 575.0,332.4 577.0,333.7 579.0,334.9 581.0,336.2 583.0,337.4 585.0,338.6 587.0,339.9 589.0,341.1 591.0,342.3 593.0,343.5 595.0,344.7 597.0,345.9 599.0,347.0 601.0,348.2 603.0,349.4 605.0,350.5 607.0,351.6 609.0,352.8 611.0,353.9 613.0,355.0 615.0,356.0 617.0,357.1 619.0,358.2 621.0,359.2 623.0,360.3 625.0,361.3 627.0,362.3 629.0,363.3 631.0,364.3 633.0,365.3 635.0,366.3 637.0,367.2 639.0,368.2 641.0,369.1 643.0,370.0 645.0,370.9 647.0,371.8 649.0,372.7 651.0,373.5 653.0,374.4 655.0,375.2 657.0,376.0 659.0,376.8 661.0,377.6 663.0,378.4 665.0,379.1 667.0,379.9 669.0,380.6 671.0,381.3 673.0,382.0 675.0,382.7 677.0,383.3 679.0,384.0 681.0,384.6 683.0,385.2 685.0,385.8 687.0,386.3 689.0,386.9 691.0,387.4 693.0,387.9 695.0,388.4 697.0,388.9 699.0,389.4 701.0,389.8 703.0,390.2 705.0,390.6 707.0,391.0 709.0,391.4 711.0,391.7 713.0,392.0 715.0,392.3 717.0,392.6 719.0,392.9 721.0,393.1 723.0,393.3 725.0,393.5 727.0,393.7 729.0,393.9 731.0,394.0 733.0,394.1 735.0,394.2 737.0,394.3 739.0,394.3 741.0,394.3 743.0,394.3 745.0,394.3 747.0,394.2 749.0,394.2 751.0,394.1 753.0,394.0 755.0,393.8 757.0,393.6 759.0,393.4 761.0,393.2 763.0,393.0 765.0,392.7 767.0,392.4 769.0,392.1 771.0,391.8 773.0,391.4 775.0,391.0 777.0,390.6 779.0,390.1 781.0,389.7 783.0,389.2 785.0,388.7 787.0,388.1 789.0,387.5 791.0,386.9 793.0,386.3 795.0,385.6 797.0,384.9 799.0,384.2 801.0,383.5 803.0,382.7 805.0,381.9 807.0,381.1 809.0,380.2 811.0,379.3 813.0,378.4 815.0,377.4 817.0,376.5 819.0,375.4 821.0,374.4 823.0,373.3 825.0,372.2 827.0,371.1 829.0,369.9 831.0,368.7 833.0,367.5 835.0,366.3 837.0,365.0 839.0,363.7 841.0,362.3 843.0,360.9 845.0,359.5 847.0,358.1 849.0,356.6 851.0,355.1 853.0,353.5 855.0,352.0 857.0,350.3 859.0,348.7 861.0,347.0 863.0,345.3 865.0,343.5 867.0,341.8 869.0,339.9 871.0,338.1 873.0,336.2 875.0,334.3 877.0,332.3 879.0,330.3 881.0,328.3 883.0,326.2 885.0,324.1 887.0,322.0 889.0,319.8 891.0,317.6 893.0,315.4 895.0,313.1 897.0,310.8 899.0,308.4 901.0,306.0 903.0,303.6 905.0,301.1 907.0,298.6" stroke="#ff0000" stroke-width="2.2"/>
<polyline points="5.0,698.9 7.0,694.8 9.0,690.8 11.0,686.8 13.0,682.8 15.0,678.9 17.0,675.0 19.0,671.2 21.0,667.4 23.0,663.6 25.0,659.9 27.0,656.3 29.0,652.7 31.0,649.1 33.0,645.6 35.0,642.1 37.0,638.7 39.0,635.3 41.0,631.9 43.0,628.6 45.0,625.3 47.0,622.1 49.0,618.9 51.0,615.8 53.0,612.7 55.0,609.6 57.0,606.6 59.0,603.6 61.0,600.7 63.0,597.7 65.0,594.9 67.0,592.1 69.0,589.3 71.0,586.5 73.0,583.8 75.0,581.2 77.0,578.5 79.0,575.9 81.0,573.4 83.0,570.9 85.0,568.4 87.0,566.0 89.0,563.6 91.0,561.2 93.0,558.9 95.0,556.6 97.0,554.4 99.0,552.1 101.0,550.0 103.0,547.8 105.0,545.7 107.0,543.7 109.0,541.6 111.0,539.6 113.0,537.7 115.0,535.8 117.0,533.9 119.0,532.0 121.0,530.2 123.0,528.4 125.0,526.7 127.0,524.9 129.0,523.3 131.0,521.6 133.0,520.0 135.0,518.4 137.0,516.9 139.0,515.3 141.0,513.9 143.0,512.4 145.0,511.0 147.0,509.6 149.0,508.3 151.0,506.9 153.0,505.6 155.0,504.4 157.0,503.2 159.0,502.0 161.0,500.8 163.0,499.7 165.0,498.6 167.0,497.5 169.0,496.5 171.0,495.4 173.0,494.5 175.0,493.5 177.0,492.6 179.0,491.7 181.0,490.8 183.0,490.0 185.0,489.2 187.0,488.4 189.0,487.7 191.0,486.9 193.0,486.3 195.0,485.6 197.0,485.0 199.0,484.3 201.0,483.8 203.0,483.2 205.0,482.7 207.0,482.2 209.0,481.7 211.0,481.3 213.0,480.8 215.0,480.4 217.0,480.1 219.0,479.7 221.0,479.4 223.0,479.1 225.0,478.9 227.0,478.6 229.0,478.4 231.0,478.2 233.0,478.0 235.0,477.9 237.0,477.8 239.0,477.7 241.0,477.6 243.0,477.5 245.0,477.5 247.0,477.5 249.0,477.5 251.0,477.6 253.0,477.6 255.0,477.7 257.0,477.8 259.0,478.0 261.0,478.1 263.0,478.3 265.0,478.5 267.0,478.7 269.0,478.9 271.0,479.2 273.0,479.5 275.0,479.8 277.0,480.1 279.0,480.4 281.0,480.8 283.0,481.2 285.0,481.6 287.0,482.0 289.0,482.4 291.0,482.9 293.0,483.4 295.0,483.9 297.0,484.4 299.0,484.9 301.0,485.5 303.0,486.0 305.0,486.6 307.0,487.2 309.0,487.8 311.0,488.5 313.0,489.1 315.0,489.8 317.0,490.5 319.0,491.2 321.0,491.9 323.0,492.6 325.0,493.4 327.0,494.2 329.0,494.9 331.0,495.7 333.0,496.5 335.0,497.4 337.0,498.2 339.0,499.1 341.0,499.9 343.0,500.8 345.0,501.7 347.0,502.6 349.0,503.6 351.0,504.5 353.0,505.5 355.0,506.4 357.0,507.4 359.0,508.4 361.0,509.4 363.0,510.4 365.0,511.5 367.0,512.5 369.0,513.6 371.0,514.6 373.0,515.7 375.0,516.8 377.0,517.9 379.0,519.0 381.0,520.1 383.0,521.2 385.0,522.4 387.0,523.5 389.0,524.7 391.0,525.9 393.0,527.1 395.0,528.2 397.0,529.4 399.0,530.6 401.0,531.9 403.0,533.1 405.0,534.3 407.0,535.6 409.0,536.8 411.0,538.1 413.0,539.3 415.0,540.6 417.0,541.9 419.0,543.2 421.0,544.5 423.0,545.8 425.0,547.1 427.0,548.4 429.0,549.7 431.0,551.0 433.0,552.4 435.0,553.7 437.0,555.1 439.0,556.4 441.0,557.8 443.0,559.1 445.0,560.5 447.0,561.9 449.0,563.2 451.0,564.6 453.0,566.0 455.0,567.4 457.0,568.8 459.0,570.1 461.0,571.5 463.0,572.9 465.0,574.3 467.0,575.7 469.0,577.2 471.0,578.6 473.0,580.0 475.0,581.4 477.0,582.8 479.0,584.2 481.0,585.6 483.0,587.0 485.0,588.5 487.0,589.9 489.0,591.3 491.0,592.7 493.0,594.2 495.0,595.6 497.0,597.0 499.0,598.4 501.0,599.8 503.0,601.3 505.0,602.7 507.0,604.1 509.0,605.5 511.0,606.9 513.0,608.3 515.0,609.8 517.0,611.2 519.0,612.6 521.0,614.0 523.0,615.4 525.0,616.8 527.0,618.2 529.0,619.6 531.0,621.0 533.0,622.4 535.0,623.7 537.0,625.1 539.0,626.5 541.0,627.9 543.0,629.2 545.0,630.6 547.0,632.0 549.0,633.3 551.0,634.7 553.0,636.0 555.0,637.4 557.0,638.7 559.0,640.0 561.0,641.3 563.0,642.6 565.0,644.0 567.0,645.3 569.0,646.6 571.0,647.8 573.0,649.1 575.0,650.4 577.0,651.7 579.0,652.9 581.0,654.2 583.0,655.4 585.0,656.6 587.0,657.9 589.0,659.1 591.0,660.3 593.0,661.5 595.0,662.7 597.0,663.9 599.0,665.0 601.0,666.2 603.0,667.4 605.0,668.5 607.0,669.6 609.0,670.8 611.0,671.9 613.0,673.0 615.0,674.0 617.0,675.1 619.0,676.2 621.0,677.2 623.0,678.3 625.0,679.3 627.0,680.3 629.0,681.3 631.0,682.3 633.0,683.3 635.0,684.3 637.0,685.2 639.0,686.2 641.0,687.1 643.0,688.0 645.0,688.9 647.0,689.8 649.0,690.7 651.0,691.5 653.0,692.4 655.0,693.2 657.0,694.0 659.0,694.8 661.0,695.6 663.0,696.4 665.0,697.1 667.0,697.9 669.0,698.6 671.0,699.3 673.0,700.0 675.0,700.7 677.0,701.3 679.0,702.0 681.0,702.6 683.0,703.2 685.0,703.8 687.0,704.3 689.0,704.9 691.0,705.4 693.0,705.9 695.0,706.4 697.0,706.9 699.0,707.4 701.0,707.8 703.0,708.2 705.0,708.6 707.0,709.0 709.0,709.4 711.0,709.7 713.0,710.0 715.0,710.3 717.0,710.6 719.0,710.9 721.0,711.1 723.0,711.3 725.0,711.5 727.0,711.7 729.0,711.9 731.0,712.0 733.0,712.1 735.0,712.2 737.0,712.3 739.0,712.3 741.0,712.3 743.0,712.3 745.0,712.3 747.0,712.2 749.0,712.2 751.0,712.1 753.0,712.0 755.0,711.8 757.0,711.6 759.0,711.4 761.0,711.2 763.0,711.0 765.0,710.7 767.0,710.4 769.0,710.1 771.0,709.8 773.0,709.4 775.0,709.0 777.0,708.6 779.0,708.1 781.0,707.7 783.0,707.2 785.0,706.7 787.0,706.1 789.0,705.5 791.0,704.9 793.0,704.3 795.0,703.6 797.0,702.9 799.0,702.2 801.0,701.5 803.0,700.7 805.0,699.9 807.0,699.1 809.0,698.2 811.0,697.3 813.0,696.4 815.0,695.4 817.0,694.5 819.0,693.4 821.0,692.4 823.0,691.3 825.0,690.2 827.0,689.1 829.0,687.9 831.0,686.7 833.0,685.5 835.0,684.3 837.0,683.0 839.0,681.7 841.0,680.3 843.0,678.9 845.0,677.5 847.0,676.1 849.0,674.6 851.0,673.1 853.0,671.5 855.0,670.0 857.0,668.3 859.0,666.7 861.0,665.0 863.0,663.3 865.0,661.5 867.0,659.8 869.0,657.9 871.0,656.1 873.0,654.2 875.0,652.3 877.0,650.3 879.0,648.3 881.0,646.3 883.0,644.2 885.0,642.1 887.0,640.0 889.0,637.8 891.0,635.6 893.0,633.4 895.0,631.1 897.0,628.8 899.0,626.4 901.0,624.0 903.0,621.6 905.0,619.1 907.0,616.6" stroke="#ff0000" stroke-width="2.2"/>
<polyline points="5.0,433.9 7.0,429.8 9.0,425.8 11.0,421.8 13.0,417.8 15.0,413.9 17.0,410.0 19.0,406.2 21.0,402.4 23.0,398.6 25.0,394.9 27.0,391.3 29.0,387.7 31.0,384.1 33.0,380.6 35.0,377.1 37.0,373.7 39.0,370.3 41.0,366.9 43.0,363.6 45.0,360.3 47.0,357.1 49.0,353.9 51.0,350.8 53.0,347.7 55.0,344.6 57.0,341.6 59.0,338.6 61.0,335.7 63.0,332.7 65.0,329.9 67.0,327.1 69.0,324.3 71.0,321.5 73.0,318.8 75.0,316.2 77.0,313.5 79.0,310.9 81.0,308.4 83.0,305.9 85.0,303.4 87.0,301.0 89.0,298.6 91.0,296.2 93.0,293.9 95.0,291.6 97.0,289.4 99.0,287.1 101.0,285.0 103.0,282.8 105.0,280.7 107.0,278.7 109.0,276.6 111.0,274.6 113.0,272.7 115.0,270.8 117.0,268.9 119.0,267.0 121.0,265.2 123.0,263.4 125.0,261.7 127.0,259.9 129.0,258.3 131.0,256.6 133.0,255.0 135.0,253.4 137.0,251.9 139.0,250.3 141.0,248.9 143.0,247.4 145.0,246.0 147.0,244.6 149.0,243.3 151.0,241.9 153.0,240.6 155.0,239.4 157.0,238.2 159.0,237.0 161.0,235.8 163.0,234.7 165.0,233.6 167.0,232.5 169.0,231.5 171.0,230.4 173.0,229.5 175.0,228.5 177.0,227.6 179.0,226.7 181.0,225.8 183.0,225.0 185.0,224.2 187.0,223.4 189.0,222.7 191.0,221.9 193.0,221.3 195.0,220.6 197.0,220.0 199.0,219.3 201.0,218.8 203.0,218.2 205.0,217.7 207.0,217.2 209.0,216.7 211.0,216.3 213.0,215.8 215.0,215.4 217.0,215.1 219.0,214.7 221.0,214.4 223.0,214.1 225.0,213.9 227.0,213.6 229.0,213.4 231.0,213.2 233.0,213.0 235.0,212.9 237.0,212.8 239.0,212.7 241.0,212.6 243.0,212.5 245.0,212.5 247.0,212.5 249.0,212.5 251.0,212.6 253.0,212.6 255.0,212.7 257.0,212.8 259.0,213.0 261.0,213.1 263.0,213.3 265.0,213.5 267.0,213.7 269.0,213.9 271.0,214.2 273.0,214.5 275.0,214.8 277.0,215.1 279.0,215.4 281.0,215.8 283.0,216.2 285.0,216.6 287.0,217.0 289.0,217.4 291.0,217.9 293.0,218.4 295.0,218.9 297.0,219.4 299.0,219.9 301.0,220.5 303.0,221.0 305.0,221.6 307.0,222.2 309.0,222.8 311.0,223.5 313.0,224.1 315.0,224.8 317.0,225.5 319.0,226.2 321.0,226.9 323.0,227.6 325.0,228.4 327.0,229.2 329.0,229.9 331.0,230.7 333.0,231.5 335.0,232.4 337.0,233.2 339.0,234.1 341.0,234.9 343.0,235.8 345.0,236.7 347.0,237.6 349.0,238.6 351.0,239.5 353.0,240.5 355.0,241.4 357.0,242.4 359.0,243.4 361.0,244.4 363.0,245.4 365.0,246.5 367.0,247.5 369.0,248.6 371.0,249.6 373.0,250.7 375.0,251.8 377.0,252.9 379.0,254.0 381.0,255.1 383.0,256.2 385.0,257.4 387.0,258.5 389.0,259.7 391.0,260.9 393.0,262.1 395.0,263.2 397.0,264.4 399.0,265.6 401.0,266.9 403.0,268.1 405.0,269.3 407.0,270.6 409.0,271.8 411.0,273.1 413.0,274.3 415.0,275.6 417.0,276.9 419.0,278.2 421.0,279.5 423.0,280.8 425.0,282.1 427.0,283.4 429.0,284.7 431.0,286.0 433.0,287.4 435.0,288.7 437.0,290.1 439.0,291.4 441.0,292.8 443.0,294.1 445.0,295.5 447.0,296.9 449.0,298.2 451.0,299.6 453.0,301.0 455.0,302.4 457.0,303.8 459.0,305.1 461.0,306.5 463.0,307.9 465.0,309.3 467.0,310.7 469.0,312.2 471.0,313.6 473.0,315.0 475.0,316.4 477.0,317.8 479.0,319.2 481.0,320.6 483.0,322.0 485.0,323.5 487.0,324.9 489.0,326.3 491.0,327.7 493.0,329.2 495.0,330.6 497.0,332.0 499.0,333.4 501.0,334.8 503.0,336.3 505.0,337.7 507.0,339.1 509.0,340.5 511.0,341.9 513.0,343.3 515.0,344.8 517.0,346.2 519.0,347.6 521.0,349.0 523.0,350.4 525.0,351.8 527.0,353.2 529.0,354.6 531.0,356.0 533.0,357.4 535.0,358.7 537.0,360.1 539.0,361.5 541.0,362.9 543.0,364.2 545.0,365.6 547.0,367.0 549.0,368.3 551.0,369.7 553.0,371.0 555.0,372.4 557.0,373.7 559.0,375.0 561.0,376.3 563.0,377.6 565.0,379.0 567.0,380.3 569.0,381.6 571.0,382.8 573.0,384.1 575.0,385.4 577.0,386.7 579.0,387.9 581.0,389.2 583.0,390.4 585.0,391.6 587.0,392.9 589.0,394.1 591.0,395.3 593.0,396.5 595.0,397.7 597.0,398.9 599.0,400.0 601.0,401.2 603.0,402.4 605.0,403.5 607.0,404.6 609.0,405.8 611.0,406.9 613.0,408.0 615.0,409.0 617.0,410.1 619.0,411.2 621.0,412.2 623.0,413.3 625.0,414.3 627.0,415.3 629.0,416.3 631.0,417.3 633.0,418.3 635.0,419.3 637.0,420.2 639.0,421.2 641.0,422.1 643.0,423.0 645.0,423.9 647.0,424.8 649.0,425.7 651.0,426.5 653.0,427.4 655.0,428.2 657.0,429.0 659.0,429.8 661.0,430.6 663.0,431.4 665.0,432.1 667.0,432.9 669.0,433.6 671.0,434.3 673.0,435.0 675.0,435.7 677.0,436.3 679.0,437.0 681.0,437.6 683.0,438.2 685.0,438.8 687.0,439.3 689.0,439.9 691.0,440.4 693.0,440.9 695.0,441.4 697.0,441.9 699.0,442.4 701.0,442.8 703.0,443.2 705.0,443.6 707.0,444.0 709.0,444.4 711.0,444.7 713.0,445.0 715.0,445.3 717.0,445.6 719.0,445.9 721.0,446.1 723.0,446.3 725.0,446.5 727.0,446.7 729.0,446.9 731.0,447.0 733.0,447.1 735.0,447.2 737.0,447.3 739.0,447.3 741.0,447.3 743.0,447.3 745.0,447.3 747.0,447.2 749.0,447.2 751.0,447.1 753.0,447.0 755.0,446.8 757.0,446.6 759.0,446.4 761.0,446.2 763.0,446.0 765.0,445.7 767.0,445.4 769.0,445.1 771.0,444.8 773.0,444.4 775.0,444.0 777.0,443.6 779.0,443.1 781.0,442.7 783.0,442.2 785.0,441.7 787.0,441.1 789.0,440.5 791.0,439.9 793.0,439.3 795.0,438.6 797.0,437.9 799.0,437.2 801.0,436.5 803.0,435.7 805.0,434.9 807.0,434.1 809.0,433.2 811.0,432.3 813.0,431.4 815.0,430.4 817.0,429.5 819.0,428.4 821.0,427.4 823.0,426.3 825.0,425.2 827.0,424.1 829.0,422.9 831.0,421.7 833.0,420.5 835.0,419.3 837.0,418.0 839.0,416.7 841.0,415.3 843.0,413.9 845.0,412.5 847.0,411.1 849.0,409.6 851.0,408.1 853.0,406.5 855.0,405.0 857.0,403.3 859.0,401.7 861.0,400.0 863.0,398.3 865.0,396.5 867.0,394.8 869.0,392.9 871.0,391.1 873.0,389.2 875.0,387.3 877.0,385.3 879.0,383.3 881.0,381.3 883.0,379.2 885.0,377.1 887.0,375.0 889.0,372.8 891.0,370.6 893.0,368.4 895.0,366.1 897.0,363.8 899.0,361.4 901.0,359.0 903.0,356.6 905.0,354.1 907.0,351.6" stroke="#9f6fe0" stroke-width="2.2"/>
<polyline points="5.0,645.9 7.0,641.8 9.0,637.8 11.0,633.8 13.0,629.8 15.0,625.9 17.0,622.0 19.0,618.2 21.0,614.4 23.0,610.6 25.0,606.9 27.0,603.3 29.0,599.7 31.0,596.1 33.0,592.6 35.0,589.1 37.0,585.7 39.0,582.3 41.0,578.9 43.0,575.6 45.0,572.3 47.0,569.1 49.0,565.9 51.0,562.8 53.0,559.7 55.0,556.6 57.0,553.6 59.0,550.6 61.0,547.7 63.0,544.7 65.0,541.9 67.0,539.1 69.0,536.3 71.0,533.5 73.0,530.8 75.0,528.2 77.0,525.5 79.0,522.9 81.0,520.4 83.0,517.9 85.0,515.4 87.0,513.0 89.0,510.6 91.0,508.2 93.0,505.9 95.0,503.6 97.0,501.4 99.0,499.1 101.0,497.0 103.0,494.8 105.0,492.7 107.0,490.7 109.0,488.6 111.0,486.6 113.0,484.7 115.0,482.8 117.0,480.9 119.0,479.0 121.0,477.2 123.0,475.4 125.0,473.7 127.0,471.9 129.0,470.3 131.0,468.6 133.0,467.0 135.0,465.4 137.0,463.9 139.0,462.3 141.0,460.9 143.0,459.4 145.0,458.0 147.0,456.6 149.0,455.3 151.0,453.9 153.0,452.6 155.0,451.4 157.0,450.2 159.0,449.0 161.0,447.8 163.0,446.7 165.0,445.6 167.0,444.5 169.0,443.5 171.0,442.4 173.0,441.5 175.0,440.5 177.0,439.6 179.0,438.7 181.0,437.8 183.0,437.0 185.0,436.2 187.0,435.4 189.0,434.7 191.0,433.9 193.0,433.3 195.0,432.6 197.0,432.0 199.0,431.3 201.0,430.8 203.0,430.2 205.0,429.7 207.0,429.2 209.0,428.7 211.0,428.3 213.0,427.8 215.0,427.4 217.0,427.1 219.0,426.7 221.0,426.4 223.0,426.1 225.0,425.9 227.0,425.6 229.0,425.4 231.0,425.2 233.0,425.0 235.0,424.9 237.0,424.8 239.0,424.7 241.0,424.6 243.0,424.5 245.0,424.5 247.0,424.5 249.0,424.5 251.0,424.6 253.0,424.6 255.0,424.7 257.0,424.8 259.0,425.0 261.0,425.1 263.0,425.3 265.0,425.5 267.0,425.7 269.0,425.9 271.0,426.2 273.0,426.5 275.0,426.8 277.0,427.1 279.0,427.4 281.0,427.8 283.0,428.2 285.0,428.6 287.0,429.0 289.0,429.4 291.0,429.9 293.0,430.4 295.0,430.9 297.0,431.4 299.0,431.9 301.0,432.5 303.0,433.0 305.0,433.6 307.0,434.2 309.0,434.8 311.0,435.5 313.0,436.1 315.0,436.8 317.0,437.5 319.0,438.2 321.0,438.9 323.0,439.6 325.0,440.4 327.0,441.2 329.0,441.9 331.0,442.7 333.0,443.5 335.0,444.4 337.0,445.2 339.0,446.1 341.0,446.9 343.0,447.8 345.0,448.7 347.0,449.6 349.0,450.6 351.0,451.5 353.0,452.5 355.0,453.4 357.0,454.4 359.0,455.4 361.0,456.4 363.0,457.4 365.0,458.5 367.0,459.5 369.0,460.6 371.0,461.6 373.0,462.7 375.0,463.8 377.0,464.9 379.0,466.0 381.0,467.1 383.0,468.2 385.0,469.4 387.0,470.5 389.0,471.7 391.0,472.9 393.0,474.1 395.0,475.2 397.0,476.4 399.0,477.6 401.0,478.9 403.0,480.1 405.0,481.3 407.0,482.6 409.0,483.8 411.0,485.1 413.0,486.3 415.0,487.6 417.0,488.9 419.0,490.2 421.0,491.5 423.0,492.8 425.0,494.1 427.0,495.4 429.0,496.7 431.0,498.0 433.0,499.4 435.0,500.7 437.0,502.1 439.0,503.4 441.0,504.8 443.0,506.1 445.0,507.5 447.0,508.9 449.0,510.2 451.0,511.6 453.0,513.0 455.0,514.4 457.0,515.8 459.0,517.1 461.0,518.5 463.0,519.9 465.0,521.3 467.0,522.7 469.0,524.2 471.0,525.6 473.0,527.0 475.0,528.4 477.0,529.8 479.0,531.2 481.0,532.6 483.0,534.0 485.0,535.5 487.0,536.9 489.0,538.3 491.0,539.7 493.0,541.2 495.0,542.6 497.0,544.0 499.0,545.4 501.0,546.8 503.0,548.3 505.0,549.7 507.0,551.1 509.0,552.5 511.0,553.9 513.0,555.3 515.0,556.8 517.0,558.2 519.0,559.6 521.0,561.0 523.0,562.4 525.0,563.8 527.0,565.2 529.0,566.6 531.0,568.0 533.0,569.4 535.0,570.7 537.0,572.1 539.0,573.5 541.0,574.9 543.0,576.2 545.0,577.6 547.0,579.0 549.0,580.3 551.0,581.7 553.0,583.0 555.0,584.4 557.0,585.7 559.0,587.0 561.0,588.3 563.0,589.6 565.0,591.0 567.0,592.3 569.0,593.6 571.0,594.8 573.0,596.1 575.0,597.4 577.0,598.7 579.0,599.9 581.0,601.2 583.0,602.4 585.0,603.6 587.0,604.9 589.0,606.1 591.0,607.3 593.0,608.5 595.0,609.7 597.0,610.9 599.0,612.0 601.0,613.2 603.0,614.4 605.0,615.5 607.0,616.6 609.0,617.8 611.0,618.9 613.0,620.0 615.0,621.0 617.0,622.1 619.0,623.2 621.0,624.2 623.0,625.3 625.0,626.3 627.0,627.3 629.0,628.3 631.0,629.3 633.0,630.3 635.0,631.3 637.0,632.2 639.0,633.2 641.0,634.1 643.0,635.0 645.0,635.9 647.0,636.8 649.0,637.7 651.0,638.5 653.0,639.4 655.0,640.2 657.0,641.0 659.0,641.8 661.0,642.6 663.0,643.4 665.0,644.1 667.0,644.9 669.0,645.6 671.0,646.3 673.0,647.0 675.0,647.7 677.0,648.3 679.0,649.0 681.0,649.6 683.0,650.2 685.0,650.8 687.0,651.3 689.0,651.9 691.0,652.4 693.0,652.9 695.0,653.4 697.0,653.9 699.0,654.4 701.0,654.8 703.0,655.2 705.0,655.6 707.0,656.0 709.0,656.4 711.0,656.7 713.0,657.0 715.0,657.3 717.0,657.6 719.0,657.9 721.0,658.1 723.0,658.3 725.0,658.5 727.0,658.7 729.0,658.9 731.0,659.0 733.0,659.1 735.0,659.2 737.0,659.3 739.0,659.3 741.0,659.3 743.0,659.3 745.0,659.3 747.0,659.2 749.0,659.2 751.0,659.1 753.0,659.0 755.0,658.8 757.0,658.6 759.0,658.4 761.0,658.2 763.0,658.0 765.0,657.7 767.0,657.4 769.0,657.1 771.0,656.8 773.0,656.4 775.0,656.0 777.0,655.6 779.0,655.1 781.0,654.7 783.0,654.2 785.0,653.7 787.0,653.1 789.0,652.5 791.0,651.9 793.0,651.3 795.0,650.6 797.0,649.9 799.0,649.2 801.0,648.5 803.0,647.7 805.0,646.9 807.0,646.1 809.0,645.2 811.0,644.3 813.0,643.4 815.0,642.4 817.0,641.5 819.0,640.4 821.0,639.4 823.0,638.3 825.0,637.2 827.0,636.1 829.0,634.9 831.0,633.7 833.0,632.5 835.0,631.3 837.0,630.0 839.0,628.7 841.0,627.3 843.0,625.9 845.0,624.5 847.0,623.1 849.0,621.6 851.0,620.1 853.0,618.5 855.0,617.0 857.0,615.3 859.0,613.7 861.0,612.0 863.0,610.3 865.0,608.5 867.0,606.8 869.0,604.9 871.0,603.1 873.0,601.2 875.0,599.3 877.0,597.3 879.0,595.3 881.0,593.3 883.0,591.2 885.0,589.1 887.0,587.0 889.0,584.8 891.0,582.6 893.0,580.4 895.0,578.1 897.0,575.8 899.0,573.4 901.0,571.0 903.0,568.6 905.0,566.1 907.0,563.6" stroke="#9f6fe0" stroke-width="2.2"/>
<polyline points="5.0,486.9 7.0,482.8 9.0,478.8 11.0,474.8 13.0,470.8 15.0,466.9 17.0,463.0 19.0,459.2 21.0,455.4 23.0,451.6 25.0,447.9 27.0,444.3 29.0,440.7 31.0,437.1 33.0,433.6 35.0,430.1 37.0,426.7 39.0,423.3 41.0,419.9 43.0,416.6 45.0,413.3 47.0,410.1 49.0,406.9 51.0,403.8 53.0,400.7 55.0,397.6 57.0,394.6 59.0,391.6 61.0,388.7 63.0,385.7 65.0,382.9 67.0,380.1 69.0,377.3 71.0,374.5 73.0,371.8 75.0,369.2 77.0,366.5 79.0,363.9 81.0,361.4 83.0,358.9 85.0,356.4 87.0,354.0 89.0,351.6 91.0,349.2 93.0,346.9 95.0,344.6 97.0,342.4 99.0,340.1 101.0,338.0 103.0,335.8 105.0,333.7 107.0,331.7 109.0,329.6 111.0,327.6 113.0,325.7 115.0,323.8 117.0,321.9 119.0,320.0 121.0,318.2 123.0,316.4 125.0,314.7 127.0,312.9 129.0,311.3 131.0,309.6 133.0,308.0 135.0,306.4 137.0,304.9 139.0,303.3 141.0,301.9 143.0,300.4 145.0,299.0 147.0,297.6 149.0,296.3 151.0,294.9 153.0,293.6 155.0,292.4 157.0,291.2 159.0,290.0 161.0,288.8 163.0,287.7 165.0,286.6 167.0,285.5 169.0,284.5 171.0,283.4 173.0,282.5 175.0,281.5 177.0,280.6 179.0,279.7 181.0,278.8 183.0,278.0 185.0,277.2 187.0,276.4 189.0,275.7 191.0,274.9 193.0,274.3 195.0,273.6 197.0,273.0 199.0,272.3 201.0,271.8 203.0,271.2 205.0,270.7 207.0,270.2 209.0,269.7 211.0,269.3 213.0,268.8 215.0,268.4 217.0,268.1 219.0,267.7 221.0,267.4 223.0,267.1 225.0,266.9 227.0,266.6 229.0,266.4 231.0,266.2 233.0,266.0 235.0,265.9 237.0,265.8 239.0,265.7 241.0,265.6 243.0,265.5 245.0,265.5 247.0,265.5 249.0,265.5 251.0,265.6 253.0,265.6 255.0,265.7 257.0,265.8 259.0,266.0 261.0,266.1 263.0,266.3 265.0,266.5 267.0,266.7 269.0,266.9 271.0,267.2 273.0,267.5 275.0,267.8 277.0,268.1 279.0,268.4 281.0,268.8 283.0,269.2 285.0,269.6 287.0,270.0 289.0,270.4 291.0,270.9 293.0,271.4 295.0,271.9 297.0,272.4 299.0,272.9 301.0,273.5 303.0,274.0 305.0,274.6 307.0,275.2 309.0,275.8 311.0,276.5 313.0,277.1 315.0,277.8 317.0,278.5 319.0,279.2 321.0,279.9 323.0,280.6 325.0,281.4 327.0,282.2 329.0,282.9 331.0,283.7 333.0,284.5 335.0,285.4 337.0,286.2 339.0,287.1 341.0,287.9 343.0,288.8 345.0,289.7 347.0,290.6 349.0,291.6 351.0,292.5 353.0,293.5 355.0,294.4 357.0,295.4 359.0,296.4 361.0,297.4 363.0,298.4 365.0,299.5 367.0,300.5 369.0,301.6 371.0,302.6 373.0,303.7 375.0,304.8 377.0,305.9 379.0,307.0 381.0,308.1 383.0,309.2 385.0,310.4 387.0,311.5 389.0,312.7 391.0,313.9 393.0,315.1 395.0,316.2 397.0,317.4 399.0,318.6 401.0,319.9 403.0,321.1 405.0,322.3 407.0,323.6 409.0,324.8 411.0,326.1 413.0,327.3 415.0,328.6 417.0,329.9 419.0,331.2 421.0,332.5 423.0,333.8 425.0,335.1 427.0,336.4 429.0,337.7 431.0,339.0 433.0,340.4 435.0,341.7 437.0,343.1 439.0,344.4 441.0,345.8 443.0,347.1 445.0,348.5 447.0,349.9 449.0,351.2 451.0,352.6 453.0,354.0 455.0,355.4 457.0,356.8 459.0,358.1 461.0,359.5 463.0,360.9 465.0,362.3 467.0,363.7 469.0,365.2 471.0,366.6 473.0,368.0 475.0,369.4 477.0,370.8 479.0,372.2 481.0,373.6 483.0,375.0 485.0,376.5 487.0,377.9 489.0,379.3 491.0,380.7 493.0,382.2 495.0,383.6 497.0,385.0 499.0,386.4 501.0,387.8 503.0,389.3 505.0,390.7 507.0,392.1 509.0,393.5 511.0,394.9 513.0,396.3 515.0,397.8 517.0,399.2 519.0,400.6 521.0,402.0 523.0,403.4 525.0,404.8 527.0,406.2 529.0,407.6 531.0,409.0 533.0,410.4 535.0,411.7 537.0,413.1 539.0,414.5 541.0,415.9 543.0,417.2 545.0,418.6 547.0,420.0 549.0,421.3 551.0,422.7 553.0,424.0 555.0,425.4 557.0,426.7 559.0,428.0 561.0,429.3 563.0,430.6 565.0,432.0 567.0,433.3 569.0,434.6 571.0,435.8 573.0,437.1 575.0,438.4 577.0,439.7 579.0,440.9 581.0,442.2 583.0,443.4 585.0,444.6 587.0,445.9 589.0,447.1 591.0,448.3 593.0,449.5 595.0,450.7 597.0,451.9 599.0,453.0 601.0,454.2 603.0,455.4 605.0,456.5 607.0,457.6 609.0,458.8 611.0,459.9 613.0,461.0 615.0,462.0 617.0,463.1 619.0,464.2 621.0,465.2 623.0,466.3 625.0,467.3 627.0,468.3 629.0,469.3 631.0,470.3 633.0,471.3 635.0,472.3 637.0,473.2 639.0,474.2 641.0,475.1 643.0,476.0 645.0,476.9 647.0,477.8 649.0,478.7 651.0,479.5 653.0,480.4 655.0,481.2 657.0,482.0 659.0,482.8 661.0,483.6 663.0,484.4 665.0,485.1 667.0,485.9 669.0,486.6 671.0,487.3 673.0,488.0 675.0,488.7 677.0,489.3 679.0,490.0 681.0,490.6 683.0,491.2 685.0,491.8 687.0,492.3 689.0,492.9 691.0,493.4 693.0,493.9 695.0,494.4 697.0,494.9 699.0,495.4 701.0,495.8 703.0,496.2 705.0,496.6 707.0,497.0 709.0,497.4 711.0,497.7 713.0,498.0 715.0,498.3 717.0,498.6 719.0,498.9 721.0,499.1 723.0,499.3 725.0,499.5 727.0,499.7 729.0,499.9 731.0,500.0 733.0,500.1 735.0,500.2 737.0,500.3 739.0,500.3 741.0,500.3 743.0,500.3 745.0,500.3 747.0,500.2 749.0,500.2 751.0,500.1 753.0,500.0 755.0,499.8 757.0,499.6 759.0,499.4 761.0,499.2 763.0,499.0 765.0,498.7 767.0,498.4 769.0,498.1 771.0,497.8 773.0,497.4 775.0,497.0 777.0,496.6 779.0,496.1 781.0,495.7 783.0,495.2 785.0,494.7 787.0,494.1 789.0,493.5 791.0,492.9 793.0,492.3 795.0,491.6 797.0,490.9 799.0,490.2 801.0,489.5 803.0,488.7 805.0,487.9 807.0,487.1 809.0,486.2 811.0,485.3 813.0,484.4 815.0,483.4 817.0,482.5 819.0,481.4 821.0,480.4 823.0,479.3 825.0,478.2 827.0,477.1 829.0,475.9 831.0,474.7 833.0,473.5 835.0,472.3 837.0,471.0 839.0,469.7 841.0,468.3 843.0,466.9 845.0,465.5 847.0,464.1 849.0,462.6 851.0,461.1 853.0,459.5 855.0,458.0 857.0,456.3 859.0,454.7 861.0,453.0 863.0,451.3 865.0,449.5 867.0,447.8 869.0,445.9 871.0,444.1 873.0,442.2 875.0,440.3 877.0,438.3 879.0,436.3 881.0,434.3 883.0,432.2 885.0,430.1 887.0,428.0 889.0,425.8 891.0,423.6 893.0,421.4 895.0,419.1 897.0,416.8 899.0,414.4 901.0,412.0 903.0,409.6 905.0,407.1 907.0,404.6" stroke="#ff8040" stroke-width="2"/>
<polyline points="5.0,592.9 7.0,588.8 9.0,584.8 11.0,580.8 13.0,576.8 15.0,572.9 17.0,569.0 19.0,565.2 21.0,561.4 23.0,557.6 25.0,553.9 27.0,550.3 29.0,546.7 31.0,543.1 33.0,539.6 35.0,536.1 37.0,532.7 39.0,529.3 41.0,525.9 43.0,522.6 45.0,519.3 47.0,516.1 49.0,512.9 51.0,509.8 53.0,506.7 55.0,503.6 57.0,500.6 59.0,497.6 61.0,494.7 63.0,491.7 65.0,488.9 67.0,486.1 69.0,483.3 71.0,480.5 73.0,477.8 75.0,475.2 77.0,472.5 79.0,469.9 81.0,467.4 83.0,464.9 85.0,462.4 87.0,460.0 89.0,457.6 91.0,455.2 93.0,452.9 95.0,450.6 97.0,448.4 99.0,446.1 101.0,444.0 103.0,441.8 105.0,439.7 107.0,437.7 109.0,435.6 111.0,433.6 113.0,431.7 115.0,429.8 117.0,427.9 119.0,426.0 121.0,424.2 123.0,422.4 125.0,420.7 127.0,418.9 129.0,417.3 131.0,415.6 133.0,414.0 135.0,412.4 137.0,410.9 139.0,409.3 141.0,407.9 143.0,406.4 145.0,405.0 147.0,403.6 149.0,402.3 151.0,400.9 153.0,399.6 155.0,398.4 157.0,397.2 159.0,396.0 161.0,394.8 163.0,393.7 165.0,392.6 167.0,391.5 169.0,390.5 171.0,389.4 173.0,388.5 175.0,387.5 177.0,386.6 179.0,385.7 181.0,384.8 183.0,384.0 185.0,383.2 187.0,382.4 189.0,381.7 191.0,380.9 193.0,380.3 195.0,379.6 197.0,379.0 199.0,378.3 201.0,377.8 203.0,377.2 205.0,376.7 207.0,376.2 209.0,375.7 211.0,375.3 213.0,374.8 215.0,374.4 217.0,374.1 219.0,373.7 221.0,373.4 223.0,373.1 225.0,372.9 227.0,372.6 229.0,372.4 231.0,372.2 233.0,372.0 235.0,371.9 237.0,371.8 239.0,371.7 241.0,371.6 243.0,371.5 245.0,371.5 247.0,371.5 249.0,371.5 251.0,371.6 253.0,371.6 255.0,371.7 257.0,371.8 259.0,372.0 261.0,372.1 263.0,372.3 265.0,372.5 267.0,372.7 269.0,372.9 271.0,373.2 273.0,373.5 275.0,373.8 277.0,374.1 279.0,374.4 281.0,374.8 283.0,375.2 285.0,375.6 287.0,376.0 289.0,376.4 291.0,376.9 293.0,377.4 295.0,377.9 297.0,378.4 299.0,378.9 301.0,379.5 303.0,380.0 305.0,380.6 307.0,381.2 309.0,381.8 311.0,382.5 313.0,383.1 315.0,383.8 317.0,384.5 319.0,385.2 321.0,385.9 323.0,386.6 325.0,387.4 327.0,388.2 329.0,388.9 331.0,389.7 333.0,390.5 335.0,391.4 337.0,392.2 339.0,393.1 341.0,393.9 343.0,394.8 345.0,395.7 347.0,396.6 349.0,397.6 351.0,398.5 353.0,399.5 355.0,400.4 357.0,401.4 359.0,402.4 361.0,403.4 363.0,404.4 365.0,405.5 367.0,406.5 369.0,407.6 371.0,408.6 373.0,409.7 375.0,410.8 377.0,411.9 379.0,413.0 381.0,414.1 383.0,415.2 385.0,416.4 387.0,417.5 389.0,418.7 391.0,419.9 393.0,421.1 395.0,422.2 397.0,423.4 399.0,424.6 401.0,425.9 403.0,427.1 405.0,428.3 407.0,429.6 409.0,430.8 411.0,432.1 413.0,433.3 415.0,434.6 417.0,435.9 419.0,437.2 421.0,438.5 423.0,439.8 425.0,441.1 427.0,442.4 429.0,443.7 431.0,445.0 433.0,446.4 435.0,447.7 437.0,449.1 439.0,450.4 441.0,451.8 443.0,453.1 445.0,454.5 447.0,455.9 449.0,457.2 451.0,458.6 453.0,460.0 455.0,461.4 457.0,462.8 459.0,464.1 461.0,465.5 463.0,466.9 465.0,468.3 467.0,469.7 469.0,471.2 471.0,472.6 473.0,474.0 475.0,475.4 477.0,476.8 479.0,478.2 481.0,479.6 483.0,481.0 485.0,482.5 487.0,483.9 489.0,485.3 491.0,486.7 493.0,488.2 495.0,489.6 497.0,491.0 499.0,492.4 501.0,493.8 503.0,495.3 505.0,496.7 507.0,498.1 509.0,499.5 511.0,500.9 513.0,502.3 515.0,503.8 517.0,505.2 519.0,506.6 521.0,508.0 523.0,509.4 525.0,510.8 527.0,512.2 529.0,513.6 531.0,515.0 533.0,516.4 535.0,517.7 537.0,519.1 539.0,520.5 541.0,521.9 543.0,523.2 545.0,524.6 547.0,526.0 549.0,527.3 551.0,528.7 553.0,530.0 555.0,531.4 557.0,532.7 559.0,534.0 561.0,535.3 563.0,536.6 565.0,538.0 567.0,539.3 569.0,540.6 571.0,541.8 573.0,543.1 575.0,544.4 577.0,545.7 579.0,546.9 581.0,548.2 583.0,549.4 585.0,550.6 587.0,551.9 589.0,553.1 591.0,554.3 593.0,555.5 595.0,556.7 597.0,557.9 599.0,559.0 601.0,560.2 603.0,561.4 605.0,562.5 607.0,563.6 609.0,564.8 611.0,565.9 613.0,567.0 615.0,568.0 617.0,569.1 619.0,570.2 621.0,571.2 623.0,572.3 625.0,573.3 627.0,574.3 629.0,575.3 631.0,576.3 633.0,577.3 635.0,578.3 637.0,579.2 639.0,580.2 641.0,581.1 643.0,582.0 645.0,582.9 647.0,583.8 649.0,584.7 651.0,585.5 653.0,586.4 655.0,587.2 657.0,588.0 659.0,588.8 661.0,589.6 663.0,590.4 665.0,591.1 667.0,591.9 669.0,592.6 671.0,593.3 673.0,594.0 675.0,594.7 677.0,595.3 679.0,596.0 681.0,596.6 683.0,597.2 685.0,597.8 687.0,598.3 689.0,598.9 691.0,599.4 693.0,599.9 695.0,600.4 697.0,600.9 699.0,601.4 701.0,601.8 703.0,602.2 705.0,602.6 707.0,603.0 709.0,603.4 711.0,603.7 713.0,604.0 715.0,604.3 717.0,604.6 719.0,604.9 721.0,605.1 723.0,605.3 725.0,605.5 727.0,605.7 729.0,605.9 731.0,606.0 733.0,606.1 735.0,606.2 737.0,606.3 739.0,606.3 741.0,606.3 743.0,606.3 745.0,606.3 747.0,606.2 749.0,606.2 751.0,606.1 753.0,606.0 755.0,605.8 757.0,605.6 759.0,605.4 761.0,605.2 763.0,605.0 765.0,604.7 767.0,604.4 769.0,604.1 771.0,603.8 773.0,603.4 775.0,603.0 777.0,602.6 779.0,602.1 781.0,601.7 783.0,601.2 785.0,600.7 787.0,600.1 789.0,599.5 791.0,598.9 793.0,598.3 795.0,597.6 797.0,596.9 799.0,596.2 801.0,595.5 803.0,594.7 805.0,593.9 807.0,593.1 809.0,592.2 811.0,591.3 813.0,590.4 815.0,589.4 817.0,588.5 819.0,587.4 821.0,586.4 823.0,585.3 825.0,584.2 827.0,583.1 829.0,581.9 831.0,580.7 833.0,579.5 835.0,578.3 837.0,577.0 839.0,575.7 841.0,574.3 843.0,572.9 845.0,571.5 847.0,570.1 849.0,568.6 851.0,567.1 853.0,565.5 855.0,564.0 857.0,562.3 859.0,560.7 861.0,559.0 863.0,557.3 865.0,555.5 867.0,553.8 869.0,551.9 871.0,550.1 873.0,548.2 875.0,546.3 877.0,544.3 879.0,542.3 881.0,540.3 883.0,538.2 885.0,536.1 887.0,534.0 889.0,531.8 891.0,529.6 893.0,527.4 895.0,525.1 897.0,522.8 899.0,520.4 901.0,518.0 903.0,515.6 905.0,513.1 907.0,510.6" stroke="#ff8040" stroke-width="2"/>
<polyline points="5.0,539.9 7.0,535.8 9.0,531.8 11.0,527.8 13.0,523.8 15.0,519.9 17.0,516.0 19.0,512.2 21.0,508.4 23.0,504.6 25.0,500.9 27.0,497.3 29.0,493.7 31.0,490.1 33.0,486.6 35.0,483.1 37.0,479.7 39.0,476.3 41.0,472.9 43.0,469.6 45.0,466.3 47.0,463.1 49.0,459.9 51.0,456.8 53.0,453.7 55.0,450.6 57.0,447.6 59.0,444.6 61.0,441.7 63.0,438.7 65.0,435.9 67.0,433.1 69.0,430.3 71.0,427.5 73.0,424.8 75.0,422.2 77.0,419.5 79.0,416.9 81.0,414.4 83.0,411.9 85.0,409.4 87.0,407.0 89.0,404.6 91.0,402.2 93.0,399.9 95.0,397.6 97.0,395.4 99.0,393.1 101.0,391.0 103.0,388.8 105.0,386.7 107.0,384.7 109.0,382.6 111.0,380.6 113.0,378.7 115.0,376.8 117.0,374.9 119.0,373.0 121.0,371.2 123.0,369.4 125.0,367.7 127.0,365.9 129.0,364.3 131.0,362.6 133.0,361.0 135.0,359.4 137.0,357.9 139.0,356.3 141.0,354.9 143.0,353.4 145.0,352.0 147.0,350.6 149.0,349.3 151.0,347.9 153.0,346.6 155.0,345.4 157.0,344.2 159.0,343.0 161.0,341.8 163.0,340.7 165.0,339.6 167.0,338.5 169.0,337.5 171.0,336.4 173.0,335.5 175.0,334.5 177.0,333.6 179.0,332.7 181.0,331.8 183.0,331.0 185.0,330.2 187.0,329.4 189.0,328.7 191.0,327.9 193.0,327.3 195.0,326.6 197.0,326.0 199.0,325.3 201.0,324.8 203.0,324.2 205.0,323.7 207.0,323.2 209.0,322.7 211.0,322.3 213.0,321.8 215.0,321.4 217.0,321.1 219.0,320.7 221.0,320.4 223.0,320.1 225.0,319.9 227.0,319.6 229.0,319.4 231.0,319.2 233.0,319.0 235.0,318.9 237.0,318.8 239.0,318.7 241.0,318.6 243.0,318.5 245.0,318.5 247.0,318.5 249.0,318.5 251.0,318.6 253.0,318.6 255.0,318.7 257.0,318.8 259.0,319.0 261.0,319.1 263.0,319.3 265.0,319.5 267.0,319.7 269.0,319.9 271.0,320.2 273.0,320.5 275.0,320.8 277.0,321.1 279.0,321.4 281.0,321.8 283.0,322.2 285.0,322.6 287.0,323.0 289.0,323.4 291.0,323.9 293.0,324.4 295.0,324.9 297.0,325.4 299.0,325.9 301.0,326.5 303.0,327.0 305.0,327.6 307.0,328.2 309.0,328.8 311.0,329.5 313.0,330.1 315.0,330.8 317.0,331.5 319.0,332.2 321.0,332.9 323.0,333.6 325.0,334.4 327.0,335.2 329.0,335.9 331.0,336.7 333.0,337.5 335.0,338.4 337.0,339.2 339.0,340.1 341.0,340.9 343.0,341.8 345.0,342.7 347.0,343.6 349.0,344.6 351.0,345.5 353.0,346.5 355.0,347.4 357.0,348.4 359.0,349.4 361.0,350.4 363.0,351.4 365.0,352.5 367.0,353.5 369.0,354.6 371.0,355.6 373.0,356.7 375.0,357.8 377.0,358.9 379.0,360.0 381.0,361.1 383.0,362.2 385.0,363.4 387.0,364.5 389.0,365.7 391.0,366.9 393.0,368.1 395.0,369.2 397.0,370.4 399.0,371.6 401.0,372.9 403.0,374.1 405.0,375.3 407.0,376.6 409.0,377.8 411.0,379.1 413.0,380.3 415.0,381.6 417.0,382.9 419.0,384.2 421.0,385.5 423.0,386.8 425.0,388.1 427.0,389.4 429.0,390.7 431.0,392.0 433.0,393.4 435.0,394.7 437.0,396.1 439.0,397.4 441.0,398.8 443.0,400.1 445.0,401.5 447.0,402.9 449.0,404.2 451.0,405.6 453.0,407.0 455.0,408.4 457.0,409.8 459.0,411.1 461.0,412.5 463.0,413.9 465.0,415.3 467.0,416.7 469.0,418.2 471.0,419.6 473.0,421.0 475.0,422.4 477.0,423.8 479.0,425.2 481.0,426.6 483.0,428.0 485.0,429.5 487.0,430.9 489.0,432.3 491.0,433.7 493.0,435.2 495.0,436.6 497.0,438.0 499.0,439.4 501.0,440.8 503.0,442.3 505.0,443.7 507.0,445.1 509.0,446.5 511.0,447.9 513.0,449.3 515.0,450.8 517.0,452.2 519.0,453.6 521.0,455.0 523.0,456.4 525.0,457.8 527.0,459.2 529.0,460.6 531.0,462.0 533.0,463.4 535.0,464.7 537.0,466.1 539.0,467.5 541.0,468.9 543.0,470.2 545.0,471.6 547.0,473.0 549.0,474.3 551.0,475.7 553.0,477.0 555.0,478.4 557.0,479.7 559.0,481.0 561.0,482.3 563.0,483.6 565.0,485.0 567.0,486.3 569.0,487.6 571.0,488.8 573.0,490.1 575.0,491.4 577.0,492.7 579.0,493.9 581.0,495.2 583.0,496.4 585.0,497.6 587.0,498.9 589.0,500.1 591.0,501.3 593.0,502.5 595.0,503.7 597.0,504.9 599.0,506.0 601.0,507.2 603.0,508.4 605.0,509.5 607.0,510.6 609.0,511.8 611.0,512.9 613.0,514.0 615.0,515.0 617.0,516.1 619.0,517.2 621.0,518.2 623.0,519.3 625.0,520.3 627.0,521.3 629.0,522.3 631.0,523.3 633.0,524.3 635.0,525.3 637.0,526.2 639.0,527.2 641.0,528.1 643.0,529.0 645.0,529.9 647.0,530.8 649.0,531.7 651.0,532.5 653.0,533.4 655.0,534.2 657.0,535.0 659.0,535.8 661.0,536.6 663.0,537.4 665.0,538.1 667.0,538.9 669.0,539.6 671.0,540.3 673.0,541.0 675.0,541.7 677.0,542.3 679.0,543.0 681.0,543.6 683.0,544.2 685.0,544.8 687.0,545.3 689.0,545.9 691.0,546.4 693.0,546.9 695.0,547.4 697.0,547.9 699.0,548.4 701.0,548.8 703.0,549.2 705.0,549.6 707.0,550.0 709.0,550.4 711.0,550.7 713.0,551.0 715.0,551.3 717.0,551.6 719.0,551.9 721.0,552.1 723.0,552.3 725.0,552.5 727.0,552.7 729.0,552.9 731.0,553.0 733.0,553.1 735.0,553.2 737.0,553.3 739.0,553.3 741.0,553.3 743.0,553.3 745.0,553.3 747.0,553.2 749.0,553.2 751.0,553.1 753.0,553.0 755.0,552.8 757.0,552.6 759.0,552.4 761.0,552.2 763.0,552.0 765.0,551.7 767.0,551.4 769.0,551.1 771.0,550.8 773.0,550.4 775.0,550.0 777.0,549.6 779.0,549.1 781.0,548.7 783.0,548.2 785.0,547.7 787.0,547.1 789.0,546.5 791.0,545.9 793.0,545.3 795.0,544.6 797.0,543.9 799.0,543.2 801.0,542.5 803.0,541.7 805.0,540.9 807.0,540.1 809.0,539.2 811.0,538.3 813.0,537.4 815.0,536.4 817.0,535.5 819.0,534.4 821.0,533.4 823.0,532.3 825.0,531.2 827.0,530.1 829.0,528.9 831.0,527.7 833.0,526.5 835.0,525.3 837.0,524.0 839.0,522.7 841.0,521.3 843.0,519.9 845.0,518.5 847.0,517.1 849.0,515.6 851.0,514.1 853.0,512.5 855.0,511.0 857.0,509.3 859.0,507.7 861.0,506.0 863.0,504.3 865.0,502.5 867.0,500.8 869.0,498.9 871.0,497.1 873.0,495.2 875.0,493.3 877.0,491.3 879.0,489.3 881.0,487.3 883.0,485.2 885.0,483.1 887.0,481.0 889.0,478.8 891.0,476.6 893.0,474.4 895.0,472.1 897.0,469.8 899.0,467.4 901.0,465.0 903.0,462.6 905.0,460.1 907.0,457.6" stroke="#0000ff" stroke-width="4.4"/>
</g>
<g clip-path="url(#pp)"><rect x="5" y="386" width="2" height="68" fill="#ff0000"/><rect x="4" y="406" width="1" height="2" fill="#ff0000"/><rect x="7" y="439" width="2" height="2" fill="#ff0000"/><rect x="11" y="397" width="2" height="60" fill="#00ff00"/><rect x="10" y="439" width="1" height="2" fill="#00ff00"/><rect x="13" y="410" width="2" height="2" fill="#00ff00"/><rect x="17" y="378" width="2" height="58" fill="#ff0000"/><rect x="16" y="410" width="1" height="2" fill="#ff0000"/><rect x="19" y="423" width="2" height="2" fill="#ff0000"/><rect x="23" y="314" width="2" height="104" fill="#00ff00"/><rect x="22" y="416" width="1" height="2" fill="#00ff00"/><rect x="25" y="337" width="2" height="2" fill="#00ff00"/><rect x="29" y="319" width="2" height="81" fill="#ff0000"/><rect x="28" y="337" width="1" height="2" fill="#ff0000"/><rect x="31" y="382" width="2" height="2" fill="#ff0000"/><rect x="35" y="368" width="2" height="61" fill="#00ff00"/><rect x="34" y="382" width="1" height="2" fill="#00ff00"/><rect x="37" y="381" width="2" height="2" fill="#00ff00"/><rect x="41" y="358" width="2" height="57" fill="#ff0000"/><rect x="40" y="381" width="1" height="2" fill="#ff0000"/><rect x="43" y="402" width="2" height="2" fill="#ff0000"/><rect x="47" y="390" width="2" height="66" fill="#ff0000"/><rect x="46" y="402" width="1" height="2" fill="#ff0000"/><rect x="49" y="441" width="2" height="2" fill="#ff0000"/><rect x="53" y="410" width="2" height="65" fill="#00ff00"/><rect x="52" y="441" width="1" height="2" fill="#00ff00"/><rect x="55" y="424" width="2" height="2" fill="#00ff00"/><rect x="59" y="369" width="2" height="54" fill="#00ff00"/><rect x="58" y="421" width="1" height="2" fill="#00ff00"/><rect x="61" y="381" width="2" height="2" fill="#00ff00"/><rect x="65" y="375" width="2" height="64" fill="#ff0000"/><rect x="64" y="381" width="1" height="2" fill="#ff0000"/><rect x="67" y="425" width="2" height="2" fill="#ff0000"/><rect x="71" y="408" width="2" height="50" fill="#00ff00"/><rect x="70" y="425" width="1" height="2" fill="#00ff00"/><rect x="73" y="419" width="2" height="2" fill="#00ff00"/><rect x="77" y="401" width="2" height="43" fill="#00ff00"/><rect x="76" y="419" width="1" height="2" fill="#00ff00"/><rect x="79" y="410" width="2" height="2" fill="#00ff00"/><rect x="83" y="410" width="2" height="86" fill="#ff0000"/><rect x="82" y="411" width="1" height="2" fill="#ff0000"/><rect x="85" y="477" width="2" height="2" fill="#ff0000"/><rect x="89" y="484" width="2" height="41" fill="#ff0000"/><rect x="88" y="485" width="1" height="2" fill="#ff0000"/><rect x="91" y="516" width="2" height="2" fill="#ff0000"/><rect x="95" y="498" width="2" height="39" fill="#00ff00"/><rect x="94" y="516" width="1" height="2" fill="#00ff00"/><rect x="97" y="507" width="2" height="2" fill="#00ff00"/><rect x="101" y="492" width="2" height="30" fill="#00ff00"/><rect x="100" y="507" width="1" height="2" fill="#00ff00"/><rect x="103" y="499" width="2" height="2" fill="#00ff00"/><rect x="107" y="444" width="2" height="77" fill="#00ff00"/><rect x="106" y="499" width="1" height="2" fill="#00ff00"/><rect x="109" y="461" width="2" height="2" fill="#00ff00"/><rect x="113" y="473" width="2" height="59" fill="#00ff00"/><rect x="112" y="517" width="1" height="2" fill="#00ff00"/><rect x="115" y="486" width="2" height="2" fill="#00ff00"/><rect x="119" y="422" width="2" height="67" fill="#00ff00"/><rect x="118" y="486" width="1" height="2" fill="#00ff00"/><rect x="121" y="437" width="2" height="2" fill="#00ff00"/><rect x="125" y="331" width="2" height="108" fill="#00ff00"/><rect x="124" y="437" width="1" height="2" fill="#00ff00"/><rect x="127" y="355" width="2" height="2" fill="#00ff00"/><rect x="131" y="340" width="2" height="88" fill="#ff0000"/><rect x="130" y="355" width="1" height="2" fill="#ff0000"/><rect x="133" y="409" width="2" height="2" fill="#ff0000"/><rect x="137" y="400" width="2" height="35" fill="#00ff00"/><rect x="136" y="409" width="1" height="2" fill="#00ff00"/><rect x="139" y="408" width="2" height="2" fill="#00ff00"/><rect x="143" y="393" width="2" height="61" fill="#ff0000"/><rect x="142" y="408" width="1" height="2" fill="#ff0000"/><rect x="145" y="441" width="2" height="2" fill="#ff0000"/><rect x="149" y="419" width="2" height="36" fill="#00ff00"/><rect x="148" y="441" width="1" height="2" fill="#00ff00"/><rect x="151" y="427" width="2" height="2" fill="#00ff00"/><rect x="155" y="430" width="2" height="60" fill="#ff0000"/><rect x="154" y="431" width="1" height="2" fill="#ff0000"/><rect x="157" y="477" width="2" height="2" fill="#ff0000"/><rect x="161" y="368" width="2" height="99" fill="#00ff00"/><rect x="160" y="465" width="1" height="2" fill="#00ff00"/><rect x="163" y="390" width="2" height="2" fill="#00ff00"/><rect x="167" y="332" width="2" height="81" fill="#00ff00"/><rect x="166" y="390" width="1" height="2" fill="#00ff00"/><rect x="169" y="350" width="2" height="2" fill="#00ff00"/><rect x="173" y="365" width="2" height="71" fill="#ff0000"/><rect x="172" y="366" width="1" height="2" fill="#ff0000"/><rect x="175" y="420" width="2" height="2" fill="#ff0000"/><rect x="179" y="420" width="2" height="32" fill="#00ff00"/><rect x="178" y="444" width="1" height="2" fill="#00ff00"/><rect x="181" y="427" width="2" height="2" fill="#00ff00"/><rect x="185" y="430" width="2" height="45" fill="#ff0000"/><rect x="184" y="431" width="1" height="2" fill="#ff0000"/><rect x="187" y="465" width="2" height="2" fill="#ff0000"/><rect x="191" y="421" width="2" height="63" fill="#00ff00"/><rect x="190" y="465" width="1" height="2" fill="#00ff00"/><rect x="193" y="435" width="2" height="2" fill="#00ff00"/><rect x="197" y="388" width="2" height="59" fill="#00ff00"/><rect x="196" y="435" width="1" height="2" fill="#00ff00"/><rect x="199" y="401" width="2" height="2" fill="#00ff00"/><rect x="203" y="383" width="2" height="43" fill="#00ff00"/><rect x="202" y="401" width="1" height="2" fill="#00ff00"/><rect x="205" y="392" width="2" height="2" fill="#00ff00"/><rect x="209" y="336" width="2" height="68" fill="#00ff00"/><rect x="208" y="392" width="1" height="2" fill="#00ff00"/><rect x="211" y="351" width="2" height="2" fill="#00ff00"/><rect x="215" y="332" width="2" height="42" fill="#00ff00"/><rect x="214" y="351" width="1" height="2" fill="#00ff00"/><rect x="217" y="341" width="2" height="2" fill="#00ff00"/><rect x="221" y="286" width="2" height="101" fill="#00ff00"/><rect x="220" y="341" width="1" height="2" fill="#00ff00"/><rect x="223" y="308" width="2" height="2" fill="#00ff00"/><rect x="227" y="255" width="2" height="54" fill="#00ff00"/><rect x="226" y="307" width="1" height="2" fill="#00ff00"/><rect x="229" y="267" width="2" height="2" fill="#00ff00"/><rect x="233" y="258" width="2" height="44" fill="#ff0000"/><rect x="232" y="267" width="1" height="2" fill="#ff0000"/><rect x="235" y="292" width="2" height="2" fill="#ff0000"/><rect x="239" y="261" width="2" height="40" fill="#ff0000"/><rect x="238" y="292" width="1" height="2" fill="#ff0000"/><rect x="241" y="292" width="2" height="2" fill="#ff0000"/><rect x="245" y="247" width="2" height="45" fill="#00ff00"/><rect x="244" y="290" width="1" height="2" fill="#00ff00"/><rect x="247" y="257" width="2" height="2" fill="#00ff00"/><rect x="251" y="242" width="2" height="48" fill="#00ff00"/><rect x="250" y="257" width="1" height="2" fill="#00ff00"/><rect x="253" y="253" width="2" height="2" fill="#00ff00"/><rect x="257" y="216" width="2" height="52" fill="#00ff00"/><rect x="256" y="253" width="1" height="2" fill="#00ff00"/><rect x="259" y="227" width="2" height="2" fill="#00ff00"/><rect x="263" y="211" width="2" height="54" fill="#ff0000"/><rect x="262" y="227" width="1" height="2" fill="#ff0000"/><rect x="265" y="253" width="2" height="2" fill="#ff0000"/><rect x="269" y="222" width="2" height="63" fill="#ff0000"/><rect x="268" y="253" width="1" height="2" fill="#ff0000"/><rect x="271" y="271" width="2" height="2" fill="#ff0000"/><rect x="275" y="270" width="2" height="41" fill="#ff0000"/><rect x="274" y="271" width="1" height="2" fill="#ff0000"/><rect x="277" y="302" width="2" height="2" fill="#ff0000"/><rect x="281" y="272" width="2" height="56" fill="#ff0000"/><rect x="280" y="302" width="1" height="2" fill="#ff0000"/><rect x="283" y="316" width="2" height="2" fill="#ff0000"/><rect x="287" y="311" width="2" height="71" fill="#ff0000"/><rect x="286" y="316" width="1" height="2" fill="#ff0000"/><rect x="289" y="366" width="2" height="2" fill="#ff0000"/><rect x="293" y="364" width="2" height="36" fill="#ff0000"/><rect x="292" y="366" width="1" height="2" fill="#ff0000"/><rect x="295" y="392" width="2" height="2" fill="#ff0000"/><rect x="299" y="338" width="2" height="50" fill="#00ff00"/><rect x="298" y="386" width="1" height="2" fill="#00ff00"/><rect x="301" y="349" width="2" height="2" fill="#00ff00"/><rect x="305" y="332" width="2" height="33" fill="#00ff00"/><rect x="304" y="349" width="1" height="2" fill="#00ff00"/><rect x="307" y="339" width="2" height="2" fill="#00ff00"/><rect x="311" y="316" width="2" height="66" fill="#00ff00"/><rect x="310" y="339" width="1" height="2" fill="#00ff00"/><rect x="313" y="331" width="2" height="2" fill="#00ff00"/><rect x="317" y="294" width="2" height="37" fill="#00ff00"/><rect x="316" y="329" width="1" height="2" fill="#00ff00"/><rect x="319" y="302" width="2" height="2" fill="#00ff00"/><rect x="323" y="287" width="2" height="37" fill="#ff0000"/><rect x="322" y="302" width="1" height="2" fill="#ff0000"/><rect x="325" y="316" width="2" height="2" fill="#ff0000"/><rect x="329" y="284" width="2" height="69" fill="#ff0000"/><rect x="328" y="316" width="1" height="2" fill="#ff0000"/><rect x="331" y="338" width="2" height="2" fill="#ff0000"/><rect x="335" y="342" width="2" height="34" fill="#ff0000"/><rect x="334" y="343" width="1" height="2" fill="#ff0000"/><rect x="337" y="369" width="2" height="2" fill="#ff0000"/><rect x="341" y="278" width="2" height="89" fill="#00ff00"/><rect x="340" y="365" width="1" height="2" fill="#00ff00"/><rect x="343" y="298" width="2" height="2" fill="#00ff00"/><rect x="347" y="189" width="2" height="107" fill="#00ff00"/><rect x="346" y="294" width="1" height="2" fill="#00ff00"/><rect x="349" y="213" width="2" height="2" fill="#00ff00"/><rect x="353" y="155" width="2" height="66" fill="#00ff00"/><rect x="352" y="213" width="1" height="2" fill="#00ff00"/><rect x="355" y="170" width="2" height="2" fill="#00ff00"/><rect x="359" y="160" width="2" height="36" fill="#ff0000"/><rect x="358" y="170" width="1" height="2" fill="#ff0000"/><rect x="361" y="188" width="2" height="2" fill="#ff0000"/><rect x="365" y="180" width="2" height="53" fill="#ff0000"/><rect x="364" y="188" width="1" height="2" fill="#ff0000"/><rect x="367" y="221" width="2" height="2" fill="#ff0000"/><rect x="371" y="184" width="2" height="68" fill="#ff0000"/><rect x="370" y="221" width="1" height="2" fill="#ff0000"/><rect x="373" y="237" width="2" height="2" fill="#ff0000"/><rect x="377" y="228" width="2" height="36" fill="#ff0000"/><rect x="376" y="237" width="1" height="2" fill="#ff0000"/><rect x="379" y="256" width="2" height="2" fill="#ff0000"/><rect x="383" y="225" width="2" height="43" fill="#00ff00"/><rect x="382" y="256" width="1" height="2" fill="#00ff00"/><rect x="385" y="234" width="2" height="2" fill="#00ff00"/><rect x="389" y="236" width="2" height="88" fill="#ff0000"/><rect x="388" y="237" width="1" height="2" fill="#ff0000"/><rect x="391" y="305" width="2" height="2" fill="#ff0000"/><rect x="395" y="299" width="2" height="37" fill="#ff0000"/><rect x="394" y="305" width="1" height="2" fill="#ff0000"/><rect x="397" y="328" width="2" height="2" fill="#ff0000"/><rect x="401" y="293" width="2" height="37" fill="#00ff00"/><rect x="400" y="328" width="1" height="2" fill="#00ff00"/><rect x="403" y="301" width="2" height="2" fill="#00ff00"/><rect x="407" y="316" width="2" height="48" fill="#ff0000"/><rect x="406" y="317" width="1" height="2" fill="#ff0000"/><rect x="409" y="353" width="2" height="2" fill="#ff0000"/><rect x="413" y="303" width="2" height="58" fill="#00ff00"/><rect x="412" y="353" width="1" height="2" fill="#00ff00"/><rect x="415" y="316" width="2" height="2" fill="#00ff00"/><rect x="419" y="357" width="2" height="56" fill="#ff0000"/><rect x="418" y="358" width="1" height="2" fill="#ff0000"/><rect x="421" y="401" width="2" height="2" fill="#ff0000"/><rect x="425" y="366" width="2" height="42" fill="#ff0000"/><rect x="424" y="376" width="1" height="2" fill="#ff0000"/><rect x="427" y="399" width="2" height="2" fill="#ff0000"/><rect x="431" y="340" width="2" height="67" fill="#00ff00"/><rect x="430" y="399" width="1" height="2" fill="#00ff00"/><rect x="433" y="355" width="2" height="2" fill="#00ff00"/><rect x="437" y="326" width="2" height="71" fill="#ff0000"/><rect x="436" y="355" width="1" height="2" fill="#ff0000"/><rect x="439" y="381" width="2" height="2" fill="#ff0000"/><rect x="443" y="378" width="2" height="69" fill="#ff0000"/><rect x="442" y="381" width="1" height="2" fill="#ff0000"/><rect x="445" y="432" width="2" height="2" fill="#ff0000"/><rect x="449" y="424" width="2" height="37" fill="#00ff00"/><rect x="448" y="432" width="1" height="2" fill="#00ff00"/><rect x="451" y="432" width="2" height="2" fill="#00ff00"/><rect x="455" y="422" width="2" height="56" fill="#ff0000"/><rect x="454" y="432" width="1" height="2" fill="#ff0000"/><rect x="457" y="466" width="2" height="2" fill="#ff0000"/><rect x="461" y="437" width="2" height="33" fill="#00ff00"/><rect x="460" y="466" width="1" height="2" fill="#00ff00"/><rect x="463" y="444" width="2" height="2" fill="#00ff00"/><rect x="467" y="427" width="2" height="36" fill="#ff0000"/><rect x="466" y="444" width="1" height="2" fill="#ff0000"/><rect x="469" y="455" width="2" height="2" fill="#ff0000"/><rect x="473" y="420" width="2" height="48" fill="#ff0000"/><rect x="472" y="455" width="1" height="2" fill="#ff0000"/><rect x="475" y="457" width="2" height="2" fill="#ff0000"/><rect x="479" y="448" width="2" height="70" fill="#ff0000"/><rect x="478" y="457" width="1" height="2" fill="#ff0000"/><rect x="481" y="503" width="2" height="2" fill="#ff0000"/><rect x="485" y="494" width="2" height="24" fill="#00ff00"/><rect x="484" y="503" width="1" height="2" fill="#00ff00"/><rect x="487" y="499" width="2" height="2" fill="#00ff00"/><rect x="491" y="472" width="2" height="40" fill="#00ff00"/><rect x="490" y="499" width="1" height="2" fill="#00ff00"/><rect x="493" y="481" width="2" height="2" fill="#00ff00"/><rect x="497" y="358" width="2" height="112" fill="#00ff00"/><rect x="496" y="468" width="1" height="2" fill="#00ff00"/><rect x="499" y="383" width="2" height="2" fill="#00ff00"/><rect x="503" y="370" width="2" height="48" fill="#ff0000"/><rect x="502" y="383" width="1" height="2" fill="#ff0000"/><rect x="505" y="407" width="2" height="2" fill="#ff0000"/><rect x="509" y="386" width="2" height="59" fill="#ff0000"/><rect x="508" y="407" width="1" height="2" fill="#ff0000"/><rect x="511" y="432" width="2" height="2" fill="#ff0000"/><rect x="515" y="431" width="2" height="48" fill="#ff0000"/><rect x="514" y="432" width="1" height="2" fill="#ff0000"/><rect x="517" y="468" width="2" height="2" fill="#ff0000"/><rect x="521" y="438" width="2" height="52" fill="#00ff00"/><rect x="520" y="468" width="1" height="2" fill="#00ff00"/><rect x="523" y="449" width="2" height="2" fill="#00ff00"/><rect x="527" y="445" width="2" height="66" fill="#ff0000"/><rect x="526" y="449" width="1" height="2" fill="#ff0000"/><rect x="529" y="496" width="2" height="2" fill="#ff0000"/><rect x="533" y="408" width="2" height="70" fill="#00ff00"/><rect x="532" y="476" width="1" height="2" fill="#00ff00"/><rect x="535" y="423" width="2" height="2" fill="#00ff00"/><rect x="539" y="402" width="2" height="58" fill="#ff0000"/><rect x="538" y="423" width="1" height="2" fill="#ff0000"/><rect x="541" y="447" width="2" height="2" fill="#ff0000"/><rect x="545" y="455" width="2" height="55" fill="#ff0000"/><rect x="544" y="456" width="1" height="2" fill="#ff0000"/><rect x="547" y="498" width="2" height="2" fill="#ff0000"/><rect x="551" y="464" width="2" height="67" fill="#00ff00"/><rect x="550" y="498" width="1" height="2" fill="#00ff00"/><rect x="553" y="479" width="2" height="2" fill="#00ff00"/><rect x="557" y="453" width="2" height="41" fill="#00ff00"/><rect x="556" y="479" width="1" height="2" fill="#00ff00"/><rect x="559" y="462" width="2" height="2" fill="#00ff00"/><rect x="563" y="425" width="2" height="78" fill="#ff0000"/><rect x="562" y="462" width="1" height="2" fill="#ff0000"/><rect x="565" y="486" width="2" height="2" fill="#ff0000"/><rect x="569" y="455" width="2" height="52" fill="#00ff00"/><rect x="568" y="486" width="1" height="2" fill="#00ff00"/><rect x="571" y="466" width="2" height="2" fill="#00ff00"/><rect x="575" y="404" width="2" height="97" fill="#00ff00"/><rect x="574" y="466" width="1" height="2" fill="#00ff00"/><rect x="577" y="425" width="2" height="2" fill="#00ff00"/><rect x="581" y="394" width="2" height="46" fill="#ff0000"/><rect x="580" y="425" width="1" height="2" fill="#ff0000"/><rect x="583" y="430" width="2" height="2" fill="#ff0000"/><rect x="587" y="375" width="2" height="69" fill="#00ff00"/><rect x="586" y="430" width="1" height="2" fill="#00ff00"/><rect x="589" y="390" width="2" height="2" fill="#00ff00"/><rect x="593" y="377" width="2" height="63" fill="#ff0000"/><rect x="592" y="390" width="1" height="2" fill="#ff0000"/><rect x="595" y="426" width="2" height="2" fill="#ff0000"/><rect x="599" y="419" width="2" height="64" fill="#ff0000"/><rect x="598" y="426" width="1" height="2" fill="#ff0000"/><rect x="601" y="469" width="2" height="2" fill="#ff0000"/><rect x="605" y="449" width="2" height="32" fill="#00ff00"/><rect x="604" y="469" width="1" height="2" fill="#00ff00"/><rect x="607" y="456" width="2" height="2" fill="#00ff00"/><rect x="611" y="422" width="2" height="50" fill="#00ff00"/><rect x="610" y="456" width="1" height="2" fill="#00ff00"/><rect x="613" y="433" width="2" height="2" fill="#00ff00"/><rect x="617" y="423" width="2" height="77" fill="#ff0000"/><rect x="616" y="433" width="1" height="2" fill="#ff0000"/><rect x="619" y="483" width="2" height="2" fill="#ff0000"/><rect x="623" y="469" width="2" height="97" fill="#ff0000"/><rect x="622" y="483" width="1" height="2" fill="#ff0000"/><rect x="625" y="545" width="2" height="2" fill="#ff0000"/><rect x="629" y="554" width="2" height="30" fill="#ff0000"/><rect x="628" y="555" width="1" height="2" fill="#ff0000"/><rect x="631" y="577" width="2" height="2" fill="#ff0000"/><rect x="635" y="569" width="2" height="49" fill="#ff0000"/><rect x="634" y="577" width="1" height="2" fill="#ff0000"/><rect x="637" y="607" width="2" height="2" fill="#ff0000"/><rect x="641" y="574" width="2" height="40" fill="#ff0000"/><rect x="640" y="584" width="1" height="2" fill="#ff0000"/><rect x="643" y="605" width="2" height="2" fill="#ff0000"/><rect x="647" y="573" width="2" height="63" fill="#ff0000"/><rect x="646" y="605" width="1" height="2" fill="#ff0000"/><rect x="649" y="622" width="2" height="2" fill="#ff0000"/><rect x="653" y="606" width="2" height="33" fill="#00ff00"/><rect x="652" y="622" width="1" height="2" fill="#00ff00"/><rect x="655" y="613" width="2" height="2" fill="#00ff00"/><rect x="659" y="585" width="2" height="61" fill="#ff0000"/><rect x="658" y="613" width="1" height="2" fill="#ff0000"/><rect x="661" y="633" width="2" height="2" fill="#ff0000"/><rect x="665" y="608" width="2" height="49" fill="#00ff00"/><rect x="664" y="633" width="1" height="2" fill="#00ff00"/><rect x="667" y="619" width="2" height="2" fill="#00ff00"/><rect x="671" y="604" width="2" height="49" fill="#ff0000"/><rect x="670" y="619" width="1" height="2" fill="#ff0000"/><rect x="673" y="642" width="2" height="2" fill="#ff0000"/><rect x="677" y="590" width="2" height="63" fill="#00ff00"/><rect x="676" y="642" width="1" height="2" fill="#00ff00"/><rect x="679" y="604" width="2" height="2" fill="#00ff00"/><rect x="683" y="574" width="2" height="69" fill="#00ff00"/><rect x="682" y="604" width="1" height="2" fill="#00ff00"/><rect x="685" y="589" width="2" height="2" fill="#00ff00"/><rect x="689" y="551" width="2" height="64" fill="#ff0000"/><rect x="688" y="589" width="1" height="2" fill="#ff0000"/><rect x="691" y="601" width="2" height="2" fill="#ff0000"/><rect x="695" y="557" width="2" height="75" fill="#00ff00"/><rect x="694" y="601" width="1" height="2" fill="#00ff00"/><rect x="697" y="573" width="2" height="2" fill="#00ff00"/><rect x="701" y="536" width="2" height="54" fill="#00ff00"/><rect x="700" y="573" width="1" height="2" fill="#00ff00"/><rect x="703" y="548" width="2" height="2" fill="#00ff00"/><rect x="707" y="558" width="2" height="30" fill="#ff0000"/><rect x="706" y="559" width="1" height="2" fill="#ff0000"/><rect x="709" y="581" width="2" height="2" fill="#ff0000"/><rect x="713" y="577" width="2" height="41" fill="#ff0000"/><rect x="712" y="581" width="1" height="2" fill="#ff0000"/><rect x="715" y="609" width="2" height="2" fill="#ff0000"/><rect x="719" y="517" width="2" height="117" fill="#00ff00"/><rect x="718" y="609" width="1" height="2" fill="#00ff00"/><rect x="721" y="543" width="2" height="2" fill="#00ff00"/><rect x="725" y="538" width="2" height="66" fill="#ff0000"/><rect x="724" y="543" width="1" height="2" fill="#ff0000"/><rect x="727" y="589" width="2" height="2" fill="#ff0000"/><rect x="731" y="569" width="2" height="26" fill="#00ff00"/><rect x="730" y="589" width="1" height="2" fill="#00ff00"/><rect x="733" y="575" width="2" height="2" fill="#00ff00"/><rect x="737" y="569" width="2" height="61" fill="#ff0000"/><rect x="736" y="575" width="1" height="2" fill="#ff0000"/><rect x="739" y="617" width="2" height="2" fill="#ff0000"/><rect x="743" y="596" width="2" height="48" fill="#ff0000"/><rect x="742" y="617" width="1" height="2" fill="#ff0000"/><rect x="745" y="633" width="2" height="2" fill="#ff0000"/><rect x="749" y="560" width="2" height="70" fill="#00ff00"/><rect x="748" y="628" width="1" height="2" fill="#00ff00"/><rect x="751" y="575" width="2" height="2" fill="#00ff00"/><rect x="755" y="567" width="2" height="28" fill="#ff0000"/><rect x="754" y="575" width="1" height="2" fill="#ff0000"/><rect x="757" y="589" width="2" height="2" fill="#ff0000"/><rect x="761" y="570" width="2" height="52" fill="#ff0000"/><rect x="760" y="589" width="1" height="2" fill="#ff0000"/><rect x="763" y="611" width="2" height="2" fill="#ff0000"/><rect x="767" y="544" width="2" height="77" fill="#00ff00"/><rect x="766" y="611" width="1" height="2" fill="#00ff00"/><rect x="769" y="561" width="2" height="2" fill="#00ff00"/><rect x="773" y="552" width="2" height="37" fill="#ff0000"/><rect x="772" y="561" width="1" height="2" fill="#ff0000"/><rect x="775" y="581" width="2" height="2" fill="#ff0000"/><rect x="779" y="475" width="2" height="110" fill="#00ff00"/><rect x="778" y="581" width="1" height="2" fill="#00ff00"/><rect x="781" y="499" width="2" height="2" fill="#00ff00"/><rect x="785" y="473" width="2" height="42" fill="#ff0000"/><rect x="784" y="499" width="1" height="2" fill="#ff0000"/><rect x="787" y="506" width="2" height="2" fill="#ff0000"/><rect x="791" y="434" width="2" height="69" fill="#00ff00"/><rect x="790" y="501" width="1" height="2" fill="#00ff00"/><rect x="793" y="449" width="2" height="2" fill="#00ff00"/><rect x="797" y="445" width="2" height="56" fill="#ff0000"/><rect x="796" y="449" width="1" height="2" fill="#ff0000"/><rect x="799" y="489" width="2" height="2" fill="#ff0000"/><rect x="803" y="452" width="2" height="48" fill="#00ff00"/><rect x="802" y="489" width="1" height="2" fill="#00ff00"/><rect x="805" y="463" width="2" height="2" fill="#00ff00"/><rect x="809" y="445" width="2" height="34" fill="#ff0000"/><rect x="808" y="463" width="1" height="2" fill="#ff0000"/><rect x="811" y="472" width="2" height="2" fill="#ff0000"/><rect x="815" y="459" width="2" height="91" fill="#ff0000"/><rect x="814" y="472" width="1" height="2" fill="#ff0000"/><rect x="817" y="530" width="2" height="2" fill="#ff0000"/><rect x="821" y="513" width="2" height="58" fill="#ff0000"/><rect x="820" y="530" width="1" height="2" fill="#ff0000"/><rect x="823" y="558" width="2" height="2" fill="#ff0000"/><rect x="827" y="520" width="2" height="46" fill="#00ff00"/><rect x="826" y="558" width="1" height="2" fill="#00ff00"/><rect x="829" y="530" width="2" height="2" fill="#00ff00"/><rect x="833" y="526" width="2" height="29" fill="#00ff00"/><rect x="832" y="548" width="1" height="2" fill="#00ff00"/><rect x="835" y="532" width="2" height="2" fill="#00ff00"/><rect x="839" y="521" width="2" height="33" fill="#ff0000"/><rect x="838" y="532" width="1" height="2" fill="#ff0000"/><rect x="841" y="547" width="2" height="2" fill="#ff0000"/><rect x="845" y="531" width="2" height="25" fill="#ff0000"/><rect x="844" y="547" width="1" height="2" fill="#ff0000"/><rect x="847" y="550" width="2" height="2" fill="#ff0000"/><rect x="851" y="502" width="2" height="62" fill="#00ff00"/><rect x="850" y="550" width="1" height="2" fill="#00ff00"/><rect x="853" y="516" width="2" height="2" fill="#00ff00"/><rect x="857" y="528" width="2" height="35" fill="#00ff00"/><rect x="856" y="554" width="1" height="2" fill="#00ff00"/><rect x="859" y="536" width="2" height="2" fill="#00ff00"/><rect x="863" y="525" width="2" height="57" fill="#00ff00"/><rect x="862" y="568" width="1" height="2" fill="#00ff00"/><rect x="865" y="538" width="2" height="2" fill="#00ff00"/><rect x="869" y="536" width="2" height="34" fill="#ff0000"/><rect x="868" y="538" width="1" height="2" fill="#ff0000"/><rect x="871" y="563" width="2" height="2" fill="#ff0000"/><rect x="875" y="450" width="2" height="116" fill="#00ff00"/><rect x="874" y="563" width="1" height="2" fill="#00ff00"/><rect x="877" y="476" width="2" height="2" fill="#00ff00"/><rect x="881" y="390" width="2" height="74" fill="#00ff00"/><rect x="880" y="462" width="1" height="2" fill="#00ff00"/><rect x="883" y="406" width="2" height="2" fill="#00ff00"/><rect x="887" y="402" width="2" height="30" fill="#ff0000"/><rect x="886" y="406" width="1" height="2" fill="#ff0000"/><rect x="889" y="425" width="2" height="2" fill="#ff0000"/><rect x="893" y="371" width="2" height="54" fill="#00ff00"/><rect x="892" y="423" width="1" height="2" fill="#00ff00"/><rect x="895" y="383" width="2" height="2" fill="#00ff00"/><rect x="899" y="384" width="2" height="54" fill="#ff0000"/><rect x="898" y="385" width="1" height="2" fill="#ff0000"/><rect x="901" y="426" width="2" height="2" fill="#ff0000"/><rect x="905" y="409" width="2" height="38" fill="#ff0000"/><rect x="904" y="426" width="1" height="2" fill="#ff0000"/><rect x="907" y="430" width="2" height="2" fill="#ff0000"/></g>
<rect x="396" y="131" width="1" height="587" fill="#ff0000"/>
<rect x="2" y="629" width="1233" height="1" fill="#ff0000"/>
<rect x="0" y="150" width="163" height="15" fill="#c9c9c9"/><rect x="0" y="164" width="163" height="1" fill="#808080"/><rect x="162" y="150" width="1" height="15" fill="#808080"/>
<text x="6" y="161.5" font-size="9.5" fill="#000" font-family='"Liberation Sans", sans-serif'><tspan x="6">O: 0</tspan><tspan x="36">H: 0</tspan><tspan x="67">L: 0</tspan><tspan x="96">C: 0</tspan><tspan x="126">Net: 0</tspan></text>
<text x="163" y="162" font-size="13" font-weight="bold" fill="#fff" textLength="312" lengthAdjust="spacingAndGlyphs">(third,150,0,4424191,13395609,255,16711680,2,false)</text>
<rect x="5" y="639" width="24" height="13" fill="#00a8a8"/>
<text x="17" y="650" font-size="11" fill="#000" text-anchor="middle" textLength="21" lengthAdjust="spacingAndGlyphs">HBH</text>
<rect x="3" y="652" width="28" height="17" fill="#ece9d8"/><rect x="3" y="652" width="28" height="1" fill="#fff"/><rect x="3" y="652" width="1" height="17" fill="#fff"/><rect x="3" y="668" width="28" height="1" fill="#808080"/><rect x="30" y="652" width="1" height="17" fill="#808080"/>
<text x="17" y="665" font-size="11" font-weight="bold" fill="#000" text-anchor="middle">?</text>
<rect x="3" y="669" width="100" height="10" fill="#000"/>
<text x="5" y="677.5" font-size="8.5" fill="#fff" textLength="98" lengthAdjust="spacingAndGlyphs">Copyright © 2005 eSignal..</text>
<rect x="2" y="679" width="1233" height="4" fill="#f2f0e6"/><rect x="2" y="679" width="1233" height="1" fill="#d8d4c4"/><rect x="2" y="682" width="1233" height="1" fill="#8c8878"/>
<rect x="2" y="706" width="1233" height="4" fill="#f2f0e6"/><rect x="2" y="706" width="1233" height="1" fill="#d8d4c4"/><rect x="2" y="709" width="1233" height="1" fill="#8c8878"/>
<text x="2" y="698" font-size="13" font-weight="bold" fill="#0000ff" textLength="49" lengthAdjust="spacingAndGlyphs">Volume</text>
<polyline points="4,715.6 8,715.4 12,714.8 16,713.9 20,713.2 24,713.0 28,713.3 32,714.0 36,714.8 40,715.1 44,714.9 48,714.4 52,713.9 56,713.7 60,713.9 64,714.3 68,714.5 72,714.4 76,713.8 80,713.1 84,712.6 88,712.7 92,713.4 96,714.3 100,715.2 104,715.7 108,715.7 112,715.5 116,715.5 120,715.8 124,716.4 128,717.1 132,717.4 136,717.3 140,716.7 144,715.9 148,715.5 152,715.5 156,716.1 160,716.9 164,717.4 168,717.6 172,717.4 176,717.0 180,717.0 184,717.3 188,717.9 192,718.4 196,718.5 200,718.0 204,717.0 208,716.0 212,715.3 216,715.1 220,715.4 224,715.7 228,715.8 232,715.4 236,714.9 240,714.4 244,714.3 248,714.7 252,715.3 256,715.8 260,715.9 264,715.3 268,714.4 272,713.6 276,713.1 280,713.1 284,713.4 288,713.7 292,713.7 296,713.3 300,712.8 304,712.6 308,712.9 312,713.7 316,714.7 320,715.6 324,715.9 328,715.6 332,715.1 336,714.8 340,714.7 344,715.1 348,715.7 352,716.0 356,715.9 360,715.5 364,715.0 368,714.9 372,715.3 376,716.3 380,717.3 384,718.0 388,718.2 392,718.0 396,717.5 400,717.3 404,717.3 408,717.7 412,718.0 416,717.9 420,717.4 424,716.5 428,715.7 432,715.3 436,715.5 440,716.1 444,716.7 448,717.0 452,716.8 456,716.3 460,715.8 464,715.5 468,715.7 472,716.0 476,716.1 480,715.8 484,715.0 488,714.0 492,713.1 496,712.7 500,712.8 504,713.4 508,713.9 512,714.1 516,713.9 520,713.6 524,713.4 528,713.6 532,714.2 536,714.9 540,715.4 544,715.3 548,714.7 552,713.9 556,713.4 560,713.3 564,713.8 568,714.5 572,715.0 576,715.2 580,715.1 584,715.0 588,715.1 592,715.7 596,716.6 600,717.6 604,718.1 608,718.1 612,717.6 616,716.9 620,716.4 624,716.4 628,716.8 632,717.2 636,717.3 640,717.1 644,716.6 648,716.1 652,716.1 656,716.5 660,717.3 664,718.0 668,718.3 672,717.9 676,717.2 680,716.4 684,715.8 688,715.7 692,715.8 696,715.9 700,715.6 704,714.9 708,714.0 712,713.4 716,713.2 720,713.7 724,714.4 728,715.1 732,715.2 736,714.9 740,714.4 744,713.9 748,713.7 752,713.9 756,714.3 760,714.5 764,714.2 768,713.5 772,712.8 776,712.4 780,712.6 784,713.3 788,714.3 792,715.1 796,715.4 800,715.4 804,715.2 808,715.2 812,715.6 816,716.2 820,716.9 824,717.2 828,716.9 832,716.3 836,715.6 840,715.2 844,715.4 848,716.1 852,716.9 856,717.4 860,717.5 864,717.3 868,717.0 872,717.0 876,717.5 880,718.1 884,718.6 888,718.6 892,718.0 896,717.0 900,716.1 904,715.5" stroke="#0000ff" stroke-width="1.5" fill="none"/>
<polyline points="4,715.0 8,714.6 12,714.2 16,714.0 20,713.8 24,713.8 28,713.8 32,713.9 36,714.1 40,714.3 44,714.4 48,714.5 52,714.5 56,714.4 60,714.3 64,714.1 68,713.8 72,713.6 76,713.4 80,713.3 84,713.3 88,713.5 92,713.7 96,714.0 100,714.5 104,714.9 108,715.4 112,715.8 116,716.2 120,716.5 124,716.6 128,716.7 132,716.7 136,716.6 140,716.4 144,716.3 148,716.2 152,716.2 156,716.3 160,716.4 164,716.7 168,716.9 172,717.2 176,717.5 180,717.8 184,717.9 188,718.0 192,717.9 196,717.7 200,717.4 204,717.0 208,716.6 212,716.1 216,715.7 220,715.4 224,715.1 228,715.0 232,714.9 236,714.9 240,715.0 244,715.1 248,715.2 252,715.2 256,715.2 260,715.1 264,714.9 268,714.6 272,714.2 276,713.9 280,713.5 284,713.2 288,713.0 292,712.9 296,712.9 300,713.1 304,713.3 308,713.7 312,714.1 316,714.5 320,714.8 324,715.1 328,715.3 332,715.5 336,715.5 340,715.5 344,715.4 348,715.3 352,715.2 356,715.2 360,715.3 364,715.4 368,715.7 372,716.0 376,716.4 380,716.8 384,717.2 388,717.6 392,717.9 396,718.0 400,718.0 404,718.0 408,717.8 412,717.5 416,717.2 420,716.8 424,716.5 428,716.3 432,716.1 436,716.0 440,716.0 444,716.1 448,716.2 452,716.3 456,716.4 460,716.4 464,716.3 468,716.1 472,715.9 476,715.5 480,715.1 484,714.6 488,714.2 492,713.8 496,713.4 500,713.2 504,713.2 508,713.2 512,713.3 516,713.6 520,713.8 524,714.1 528,714.3 532,714.5 536,714.6 540,714.6 544,714.6 548,714.4 552,714.3 556,714.1 560,714.0 564,714.0 568,714.1 572,714.3 576,714.6 580,714.9 584,715.4 588,715.9 592,716.3 596,716.8 600,717.1 604,717.3 608,717.5 612,717.5 616,717.4 620,717.2 624,717.0 628,716.8 632,716.6 636,716.5 640,716.5 644,716.6 648,716.7 652,716.9 656,717.1 660,717.3 664,717.4 668,717.5 672,717.4 676,717.3 680,717.0 684,716.6 688,716.2 692,715.7 696,715.2 700,714.8 704,714.4 708,714.2 712,714.1 716,714.0 720,714.1 724,714.2 728,714.3 732,714.5 736,714.6 740,714.6 744,714.6 748,714.5 752,714.3 756,714.0 760,713.7 764,713.5 768,713.3 772,713.2 776,713.2 780,713.3 784,713.5 788,713.9 792,714.3 796,714.8 800,715.2 804,715.6 808,716.0 812,716.2 816,716.4 820,716.4 824,716.4 828,716.3 832,716.2 836,716.1 840,716.0 844,716.0 848,716.1 852,716.3 856,716.6 860,716.9 864,717.3 868,717.6 872,717.8 876,718.0 880,718.1 884,718.0 888,717.8 892,717.5 896,717.1 900,716.7 904,716.3" stroke="#ff0000" stroke-width="1.5" fill="none"/>
<rect x="2" y="718" width="1233" height="1" fill="#fff"/>
<rect x="1235" y="131" width="1" height="588" fill="#fff"/>
<text x="1237" y="681" font-size="13" font-weight="bold" fill="#fff">1.16</text>
<text x="1237" y="628" font-size="13" font-weight="bold" fill="#fff">1.17</text>
<text x="1237" y="576" font-size="13" font-weight="bold" fill="#fff">1.18</text>
<text x="1237" y="523" font-size="13" font-weight="bold" fill="#fff">1.19</text>
<text x="1237" y="471" font-size="13" font-weight="bold" fill="#fff">1.2</text>
<text x="1237" y="418" font-size="13" font-weight="bold" fill="#fff">1.21</text>
<text x="1237" y="366" font-size="13" font-weight="bold" fill="#fff">1.22</text>
<text x="1237" y="313" font-size="13" font-weight="bold" fill="#fff">1.23</text>
<text x="1237" y="261" font-size="13" font-weight="bold" fill="#fff">1.24</text>
<text x="1237" y="208" font-size="13" font-weight="bold" fill="#fff">1.25</text>
<text x="1237" y="156" font-size="13" font-weight="bold" fill="#fff">1.26</text>
<rect x="1236" y="423" width="39" height="16" fill="#ff0000"/>
<text x="1237" y="436" font-size="13" font-weight="bold" fill="#000" textLength="37" lengthAdjust="spacingAndGlyphs">1.2066</text>
<rect x="1237" y="621" width="41" height="16" fill="#c8c8c8"/>
<clipPath id="lc"><rect x="1237" y="621" width="41" height="16"/></clipPath><text x="1238" y="634" font-size="13" font-weight="bold" fill="#000" clip-path="url(#lc)">1.16880</text>
<rect x="1236" y="712" width="32" height="16" fill="#ff0000"/>
<text x="1237" y="725" font-size="12.5" font-weight="bold" fill="#000" textLength="30" lengthAdjust="spacingAndGlyphs">85.76</text>
<text x="29.5" y="731.5" font-size="12.5" font-weight="bold" fill="#fff">20</text>
<text x="59.5" y="731.5" font-size="12.5" font-weight="bold" fill="#fff">27</text>
<text x="89.5" y="731.5" font-size="12.5" font-weight="bold" fill="#fff">4</text>
<text x="119.5" y="731.5" font-size="12.5" font-weight="bold" fill="#fff">11</text>
<text x="149.5" y="731.5" font-size="12.5" font-weight="bold" fill="#fff">18</text>
<text x="179.5" y="731.5" font-size="12.5" font-weight="bold" fill="#fff">25</text>
<text x="209.5" y="731.5" font-size="12.5" font-weight="bold" fill="#fff">1</text>
<text x="239.5" y="731.5" font-size="12.5" font-weight="bold" fill="#fff">8</text>
<text x="269.5" y="731.5" font-size="12.5" font-weight="bold" fill="#fff">15</text>
<text x="299.5" y="731.5" font-size="12.5" font-weight="bold" fill="#fff">22</text>
<text x="329.5" y="731.5" font-size="12.5" font-weight="bold" fill="#fff">29</text>
<text x="359.5" y="731.5" font-size="12.5" font-weight="bold" fill="#fff">5</text>
<text x="419.5" y="731.5" font-size="12.5" font-weight="bold" fill="#fff">19</text>
<text x="449.5" y="731.5" font-size="12.5" font-weight="bold" fill="#fff">26</text>
<text x="479.5" y="731.5" font-size="12.5" font-weight="bold" fill="#fff">3</text>
<text x="509.5" y="731.5" font-size="12.5" font-weight="bold" fill="#fff">10</text>
<text x="539.5" y="731.5" font-size="12.5" font-weight="bold" fill="#fff">17</text>
<text x="569.5" y="731.5" font-size="12.5" font-weight="bold" fill="#fff">24</text>
<text x="599.5" y="731.5" font-size="12.5" font-weight="bold" fill="#fff">31</text>
<text x="629.5" y="731.5" font-size="12.5" font-weight="bold" fill="#fff">7</text>
<text x="659.5" y="731.5" font-size="12.5" font-weight="bold" fill="#fff">14</text>
<text x="689.5" y="731.5" font-size="12.5" font-weight="bold" fill="#fff">21</text>
<text x="719.5" y="731.5" font-size="12.5" font-weight="bold" fill="#fff">28</text>
<text x="749.5" y="731.5" font-size="12.5" font-weight="bold" fill="#fff">5</text>
<text x="779.5" y="731.5" font-size="12.5" font-weight="bold" fill="#fff">12</text>
<text x="809.5" y="731.5" font-size="12.5" font-weight="bold" fill="#fff">19</text>
<text x="839.5" y="731.5" font-size="12.5" font-weight="bold" fill="#fff">26</text>
<text x="869.5" y="731.5" font-size="12.5" font-weight="bold" fill="#fff">2</text>
<text x="899.5" y="731.5" font-size="12.5" font-weight="bold" fill="#fff">9</text>
<text x="84" y="747.5" font-size="12.5" font-weight="bold" fill="#fff">Jul</text>
<text x="210" y="747.5" font-size="12.5" font-weight="bold" fill="#fff">Aug</text>
<text x="348" y="747.5" font-size="12.5" font-weight="bold" fill="#fff">Sep</text>
<text x="480" y="747.5" font-size="12.5" font-weight="bold" fill="#fff">Oct</text>
<text x="606" y="747.5" font-size="12.5" font-weight="bold" fill="#fff">Nov</text>
<text x="738" y="747.5" font-size="12.5" font-weight="bold" fill="#fff">Dec</text>
<text x="870" y="747.5" font-size="12.5" font-weight="bold" fill="#fff">2006</text>
<path d="M30.5 716v3M60.5 716v3M84.5 716v3M120.5 716v3M150.5 716v3M180.5 716v3M210.5 716v3M240.5 716v3M270.5 716v3M300.5 716v3M330.5 716v3M348.5 716v3M420.5 716v3M450.5 716v3M480.5 716v3M510.5 716v3M540.5 716v3M570.5 716v3M600.5 716v3M606.5 716v3M660.5 716v3M690.5 716v3M720.5 716v3M738.5 716v3M780.5 716v3M810.5 716v3M840.5 716v3M870.5 716v3M900.5 716v3" stroke="#fff" stroke-width="1"/>
<rect x="366" y="718" width="60" height="17" fill="#c8c8c8"/>
<text x="371" y="731.5" font-size="12.5" font-weight="bold" fill="#000" textLength="50" lengthAdjust="spacingAndGlyphs">09/13/05</text>
<rect x="1278" y="131" width="2" height="620" fill="#f0f0f0"/>
</svg></body></html>
